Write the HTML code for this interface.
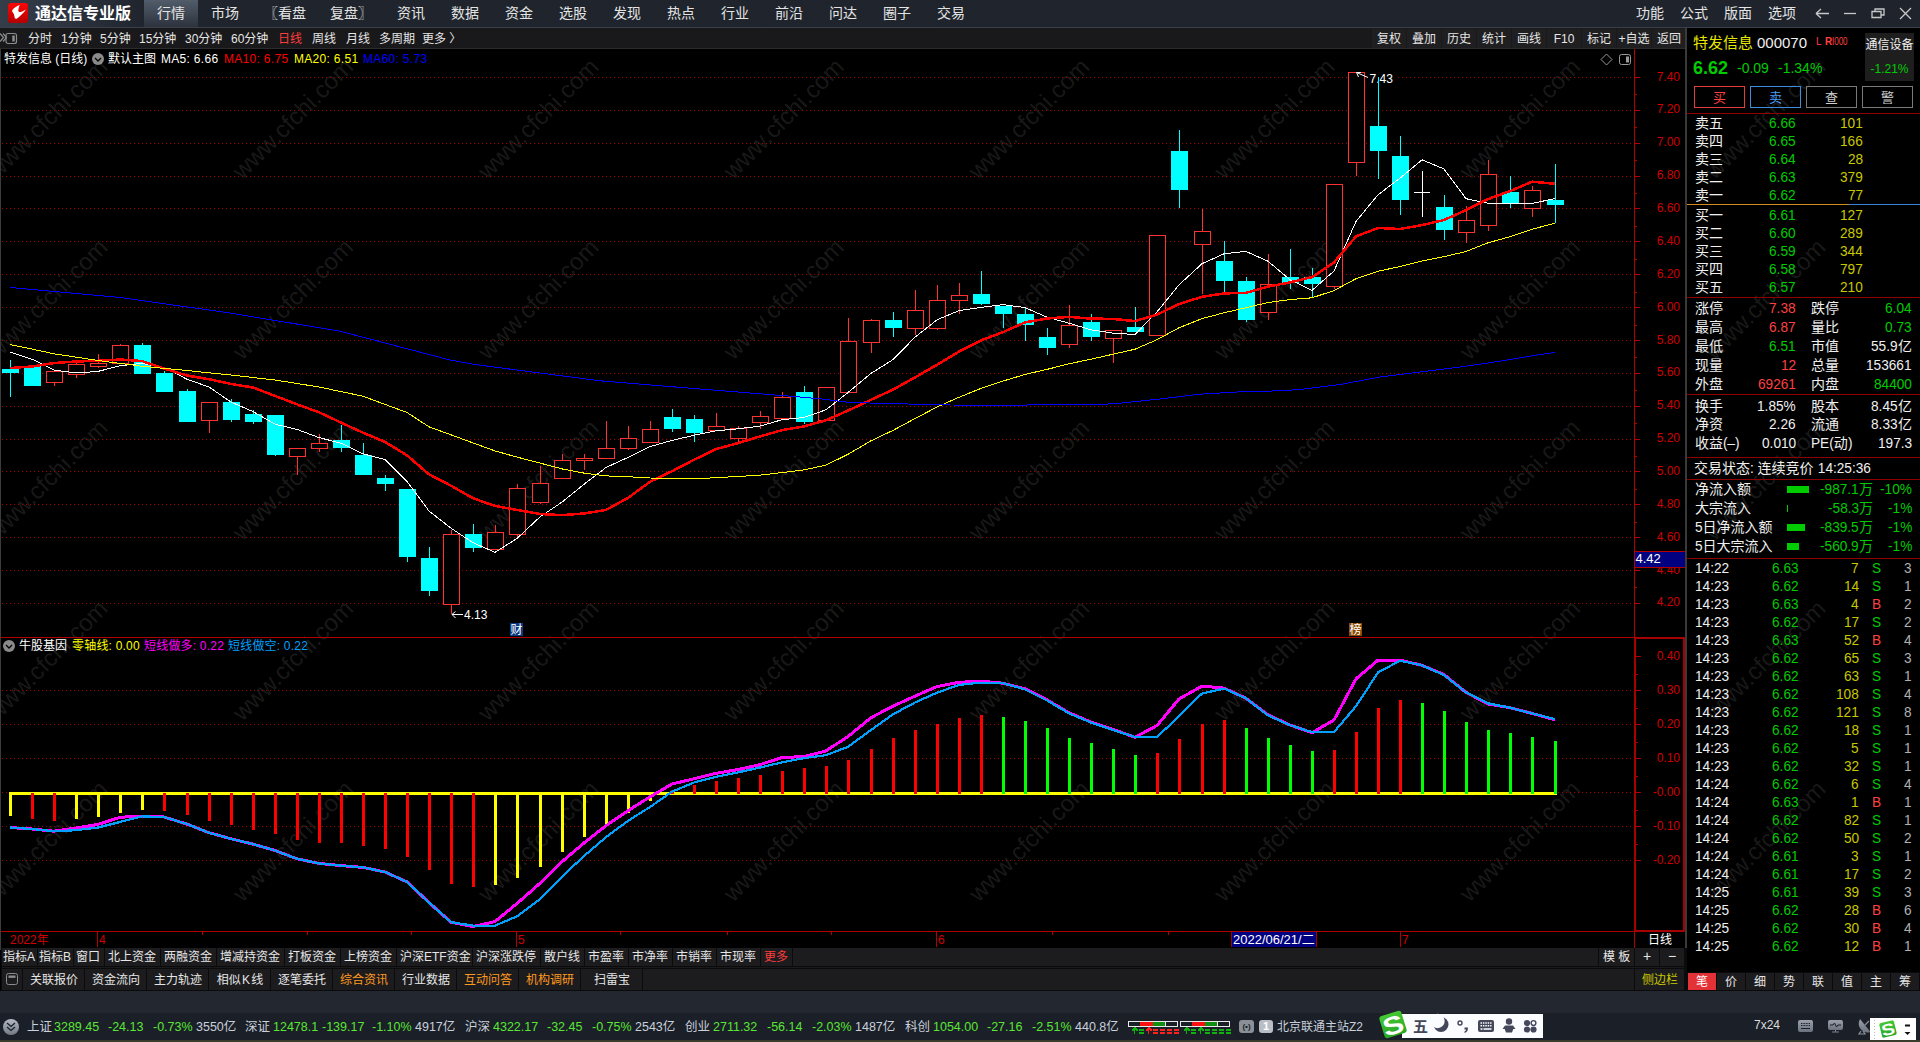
<!DOCTYPE html>
<html lang="zh-CN"><head><meta charset="utf-8"><title>通达信专业版</title>
<style>
html,body{margin:0;padding:0;}
body{width:1920px;height:1042px;overflow:hidden;position:relative;background:#000;font-family:"Liberation Sans","Noto Sans CJK SC",sans-serif;}
.t{position:absolute;white-space:nowrap;}
.b{position:absolute;}
.n{display:inline-block;transform-origin:left center;white-space:pre;}
svg{position:absolute;left:0;top:0;}
svg text{font-family:"Liberation Sans","Noto Sans CJK SC",sans-serif;}
</style></head><body>

<div class="b" style="left:0px;top:0px;width:1920px;height:28px;background:linear-gradient(90deg,#353d49 0,#2c333e 70px,#1f242d 145px,#1e232c 100%);"></div>
<div class="b" style="left:0px;top:27px;width:1920px;height:1px;background:#3a404b;"></div>
<div class="b" style="left:144px;top:0px;width:54px;height:27px;background:linear-gradient(#525c6a,#2c333d);"></div>
<svg width="40" height="27" viewBox="0 0 40 27"><defs><linearGradient id="lg" x1="0" y1="0" x2="0" y2="1"><stop offset="0" stop-color="#ff0505"/><stop offset="1" stop-color="#b40000"/></linearGradient></defs>
<rect x="8" y="3" width="20" height="20" rx="3" fill="url(#lg)"/>
<path d="M19.700 5C16 6.500 12.500 9 12 11L14 14.500L14.900 18.500L16.800 18.700C20 16 24 12.500 25.900 9.400C23.500 11 21 12 19.200 12C18 11.500 18 9.500 19.700 5z" fill="#fff"/></svg>
<div class="t" style="top:3.5px;font-size:16px;line-height:20px;color:#fff;font-weight:bold;left:35px;">通达信专业版</div>
<div class="t" style="top:4.0px;font-size:14px;line-height:18px;color:#e4e4e4;left:157px;">行情</div>
<div class="t" style="top:4.0px;font-size:14px;line-height:18px;color:#e4e4e4;left:211px;">市场</div>
<div class="t" style="top:4.0px;font-size:14px;line-height:18px;color:#e4e4e4;left:264px;">〖看盘</div>
<div class="t" style="top:4.0px;font-size:14px;line-height:18px;color:#e4e4e4;left:330px;">复盘〗</div>
<div class="t" style="top:4.0px;font-size:14px;line-height:18px;color:#e4e4e4;left:397px;">资讯</div>
<div class="t" style="top:4.0px;font-size:14px;line-height:18px;color:#e4e4e4;left:451px;">数据</div>
<div class="t" style="top:4.0px;font-size:14px;line-height:18px;color:#e4e4e4;left:505px;">资金</div>
<div class="t" style="top:4.0px;font-size:14px;line-height:18px;color:#e4e4e4;left:559px;">选股</div>
<div class="t" style="top:4.0px;font-size:14px;line-height:18px;color:#e4e4e4;left:613px;">发现</div>
<div class="t" style="top:4.0px;font-size:14px;line-height:18px;color:#e4e4e4;left:667px;">热点</div>
<div class="t" style="top:4.0px;font-size:14px;line-height:18px;color:#e4e4e4;left:721px;">行业</div>
<div class="t" style="top:4.0px;font-size:14px;line-height:18px;color:#e4e4e4;left:775px;">前沿</div>
<div class="t" style="top:4.0px;font-size:14px;line-height:18px;color:#e4e4e4;left:829px;">问达</div>
<div class="t" style="top:4.0px;font-size:14px;line-height:18px;color:#e4e4e4;left:883px;">圈子</div>
<div class="t" style="top:4.0px;font-size:14px;line-height:18px;color:#e4e4e4;left:937px;">交易</div>
<div class="t" style="top:4.0px;font-size:14px;line-height:18px;color:#e4e4e4;left:1636px;">功能</div>
<div class="t" style="top:4.0px;font-size:14px;line-height:18px;color:#e4e4e4;left:1680px;">公式</div>
<div class="t" style="top:4.0px;font-size:14px;line-height:18px;color:#e4e4e4;left:1724px;">版面</div>
<div class="t" style="top:4.0px;font-size:14px;line-height:18px;color:#e4e4e4;left:1768px;">选项</div>
<svg width="1920" height="27" viewBox="0 0 1920 27" fill="none" stroke="#c8c8c8" stroke-width="1.3">
<path d="M1816 13.500h13M1816 13.500l5-4.500M1816 13.500l5 4.500"/>
<path d="M1844 13.500h12"/>
<path d="M1872 11.500h9v6h-9zM1875 11.500v-2.500h9v6h-3"/>
<path d="M1900 8l11 11M1911 8l-11 11"/></svg>
<div class="b" style="left:0px;top:28px;width:1687px;height:21px;background:#19191b;"></div>
<div class="b" style="left:0px;top:48px;width:1686px;height:1px;background:#2c2c2e;"></div>
<svg width="30" height="50" viewBox="0 0 30 50" fill="none" stroke="#8c8c8c" stroke-width="1.200"><path d="M0 33.500l3.500 4-3.500 4M3 33.500l3.500 4-3.500 4"/><rect x="6" y="33.500" width="10.500" height="10" rx="2"/><path d="M13.500 35.500v6" stroke-width="2.500"/></svg>
<div class="t" style="top:30.5px;font-size:12px;line-height:16px;color:#e6e6e6;left:28px;">分时</div>
<div class="t" style="top:30.5px;font-size:12px;line-height:16px;color:#e6e6e6;left:61px;">1分钟</div>
<div class="t" style="top:30.5px;font-size:12px;line-height:16px;color:#e6e6e6;left:100px;">5分钟</div>
<div class="t" style="top:30.5px;font-size:12px;line-height:16px;color:#e6e6e6;left:139px;">15分钟</div>
<div class="t" style="top:30.5px;font-size:12px;line-height:16px;color:#e6e6e6;left:185px;">30分钟</div>
<div class="t" style="top:30.5px;font-size:12px;line-height:16px;color:#e6e6e6;left:231px;">60分钟</div>
<div class="t" style="top:30.5px;font-size:12px;line-height:16px;color:#ff3c3c;left:278px;">日线</div>
<div class="t" style="top:30.5px;font-size:12px;line-height:16px;color:#e6e6e6;left:312px;">周线</div>
<div class="t" style="top:30.5px;font-size:12px;line-height:16px;color:#e6e6e6;left:346px;">月线</div>
<div class="t" style="top:30.5px;font-size:12px;line-height:16px;color:#e6e6e6;left:379px;">多周期</div>
<div class="t" style="top:30.5px;font-size:12px;line-height:16px;color:#e6e6e6;left:422px;">更多 〉</div>
<div class="b" style="left:1372px;top:29px;width:34px;height:19px;background:#1f1f21;"></div>
<div class="t" style="top:30.5px;font-size:12px;line-height:16px;color:#e6e6e6;left:1189px;width:400px;text-align:center;">复权</div>
<div class="b" style="left:1407px;top:29px;width:34px;height:19px;background:#1f1f21;"></div>
<div class="t" style="top:30.5px;font-size:12px;line-height:16px;color:#e6e6e6;left:1224px;width:400px;text-align:center;">叠加</div>
<div class="b" style="left:1442px;top:29px;width:34px;height:19px;background:#1f1f21;"></div>
<div class="t" style="top:30.5px;font-size:12px;line-height:16px;color:#e6e6e6;left:1259px;width:400px;text-align:center;">历史</div>
<div class="b" style="left:1477px;top:29px;width:34px;height:19px;background:#1f1f21;"></div>
<div class="t" style="top:30.5px;font-size:12px;line-height:16px;color:#e6e6e6;left:1294px;width:400px;text-align:center;">统计</div>
<div class="b" style="left:1512px;top:29px;width:34px;height:19px;background:#1f1f21;"></div>
<div class="t" style="top:30.5px;font-size:12px;line-height:16px;color:#e6e6e6;left:1329px;width:400px;text-align:center;">画线</div>
<div class="b" style="left:1547px;top:29px;width:34px;height:19px;background:#1f1f21;"></div>
<div class="t" style="top:30.5px;font-size:12px;line-height:16px;color:#e6e6e6;left:1364px;width:400px;text-align:center;">F10</div>
<div class="b" style="left:1582px;top:29px;width:34px;height:19px;background:#1f1f21;"></div>
<div class="t" style="top:30.5px;font-size:12px;line-height:16px;color:#e6e6e6;left:1399px;width:400px;text-align:center;">标记</div>
<div class="b" style="left:1617px;top:29px;width:34px;height:19px;background:#1f1f21;"></div>
<div class="t" style="top:30.5px;font-size:12px;line-height:16px;color:#e6e6e6;left:1434px;width:400px;text-align:center;">+自选</div>
<div class="b" style="left:1652px;top:29px;width:34px;height:19px;background:#1f1f21;"></div>
<div class="t" style="top:30.5px;font-size:12px;line-height:16px;color:#e6e6e6;left:1469px;width:400px;text-align:center;">返回</div>
<svg width="1688" height="950" viewBox="0 0 1688 950" shape-rendering="crispEdges">
<g shape-rendering="auto"><text transform="translate(-3.0,180.5) rotate(-45)" font-size="24" fill="#ffffff" fill-opacity="0.115">www.cfchi.com</text><text transform="translate(-3.0,361.1) rotate(-45)" font-size="24" fill="#ffffff" fill-opacity="0.115">www.cfchi.com</text><text transform="translate(-3.0,541.7) rotate(-45)" font-size="24" fill="#ffffff" fill-opacity="0.115">www.cfchi.com</text><text transform="translate(-3.0,722.3) rotate(-45)" font-size="24" fill="#ffffff" fill-opacity="0.115">www.cfchi.com</text><text transform="translate(-3.0,902.9) rotate(-45)" font-size="24" fill="#ffffff" fill-opacity="0.115">www.cfchi.com</text><text transform="translate(242.4,180.5) rotate(-45)" font-size="24" fill="#ffffff" fill-opacity="0.115">www.cfchi.com</text><text transform="translate(242.4,361.1) rotate(-45)" font-size="24" fill="#ffffff" fill-opacity="0.115">www.cfchi.com</text><text transform="translate(242.4,541.7) rotate(-45)" font-size="24" fill="#ffffff" fill-opacity="0.115">www.cfchi.com</text><text transform="translate(242.4,722.3) rotate(-45)" font-size="24" fill="#ffffff" fill-opacity="0.115">www.cfchi.com</text><text transform="translate(242.4,902.9) rotate(-45)" font-size="24" fill="#ffffff" fill-opacity="0.115">www.cfchi.com</text><text transform="translate(487.8,180.5) rotate(-45)" font-size="24" fill="#ffffff" fill-opacity="0.115">www.cfchi.com</text><text transform="translate(487.8,361.1) rotate(-45)" font-size="24" fill="#ffffff" fill-opacity="0.115">www.cfchi.com</text><text transform="translate(487.8,541.7) rotate(-45)" font-size="24" fill="#ffffff" fill-opacity="0.115">www.cfchi.com</text><text transform="translate(487.8,722.3) rotate(-45)" font-size="24" fill="#ffffff" fill-opacity="0.115">www.cfchi.com</text><text transform="translate(487.8,902.9) rotate(-45)" font-size="24" fill="#ffffff" fill-opacity="0.115">www.cfchi.com</text><text transform="translate(733.2,180.5) rotate(-45)" font-size="24" fill="#ffffff" fill-opacity="0.115">www.cfchi.com</text><text transform="translate(733.2,361.1) rotate(-45)" font-size="24" fill="#ffffff" fill-opacity="0.115">www.cfchi.com</text><text transform="translate(733.2,541.7) rotate(-45)" font-size="24" fill="#ffffff" fill-opacity="0.115">www.cfchi.com</text><text transform="translate(733.2,722.3) rotate(-45)" font-size="24" fill="#ffffff" fill-opacity="0.115">www.cfchi.com</text><text transform="translate(733.2,902.9) rotate(-45)" font-size="24" fill="#ffffff" fill-opacity="0.115">www.cfchi.com</text><text transform="translate(978.6,180.5) rotate(-45)" font-size="24" fill="#ffffff" fill-opacity="0.115">www.cfchi.com</text><text transform="translate(978.6,361.1) rotate(-45)" font-size="24" fill="#ffffff" fill-opacity="0.115">www.cfchi.com</text><text transform="translate(978.6,541.7) rotate(-45)" font-size="24" fill="#ffffff" fill-opacity="0.115">www.cfchi.com</text><text transform="translate(978.6,722.3) rotate(-45)" font-size="24" fill="#ffffff" fill-opacity="0.115">www.cfchi.com</text><text transform="translate(978.6,902.9) rotate(-45)" font-size="24" fill="#ffffff" fill-opacity="0.115">www.cfchi.com</text><text transform="translate(1224.0,180.5) rotate(-45)" font-size="24" fill="#ffffff" fill-opacity="0.115">www.cfchi.com</text><text transform="translate(1224.0,361.1) rotate(-45)" font-size="24" fill="#ffffff" fill-opacity="0.115">www.cfchi.com</text><text transform="translate(1224.0,541.7) rotate(-45)" font-size="24" fill="#ffffff" fill-opacity="0.115">www.cfchi.com</text><text transform="translate(1224.0,722.3) rotate(-45)" font-size="24" fill="#ffffff" fill-opacity="0.115">www.cfchi.com</text><text transform="translate(1224.0,902.9) rotate(-45)" font-size="24" fill="#ffffff" fill-opacity="0.115">www.cfchi.com</text><text transform="translate(1469.4,180.5) rotate(-45)" font-size="24" fill="#ffffff" fill-opacity="0.115">www.cfchi.com</text><text transform="translate(1469.4,361.1) rotate(-45)" font-size="24" fill="#ffffff" fill-opacity="0.115">www.cfchi.com</text><text transform="translate(1469.4,541.7) rotate(-45)" font-size="24" fill="#ffffff" fill-opacity="0.115">www.cfchi.com</text><text transform="translate(1469.4,722.3) rotate(-45)" font-size="24" fill="#ffffff" fill-opacity="0.115">www.cfchi.com</text><text transform="translate(1469.4,902.9) rotate(-45)" font-size="24" fill="#ffffff" fill-opacity="0.115">www.cfchi.com</text></g>
<path d="M2 77.5H1632" stroke="#a80000" stroke-width="1" stroke-dasharray="1 3"/>
<path d="M2 110.5H1632" stroke="#a80000" stroke-width="1" stroke-dasharray="1 3"/>
<path d="M2 143.5H1632" stroke="#a80000" stroke-width="1" stroke-dasharray="1 3"/>
<path d="M2 176.5H1632" stroke="#a80000" stroke-width="1" stroke-dasharray="1 3"/>
<path d="M2 208.5H1632" stroke="#a80000" stroke-width="1" stroke-dasharray="1 3"/>
<path d="M2 241.5H1632" stroke="#a80000" stroke-width="1" stroke-dasharray="1 3"/>
<path d="M2 274.5H1632" stroke="#a80000" stroke-width="1" stroke-dasharray="1 3"/>
<path d="M2 307.5H1632" stroke="#a80000" stroke-width="1" stroke-dasharray="1 3"/>
<path d="M2 340.5H1632" stroke="#a80000" stroke-width="1" stroke-dasharray="1 3"/>
<path d="M2 373.5H1632" stroke="#a80000" stroke-width="1" stroke-dasharray="1 3"/>
<path d="M2 406.5H1632" stroke="#a80000" stroke-width="1" stroke-dasharray="1 3"/>
<path d="M2 439.5H1632" stroke="#a80000" stroke-width="1" stroke-dasharray="1 3"/>
<path d="M2 471.5H1632" stroke="#a80000" stroke-width="1" stroke-dasharray="1 3"/>
<path d="M2 504.5H1632" stroke="#a80000" stroke-width="1" stroke-dasharray="1 3"/>
<path d="M2 537.5H1632" stroke="#a80000" stroke-width="1" stroke-dasharray="1 3"/>
<path d="M2 570.5H1632" stroke="#a80000" stroke-width="1" stroke-dasharray="1 3"/>
<path d="M2 603.5H1632" stroke="#a80000" stroke-width="1" stroke-dasharray="1 3"/>
<path d="M2 690.5H1632" stroke="#a80000" stroke-width="1" stroke-dasharray="1 3"/>
<path d="M2 724.5H1632" stroke="#a80000" stroke-width="1" stroke-dasharray="1 3"/>
<path d="M2 758.5H1632" stroke="#a80000" stroke-width="1" stroke-dasharray="1 3"/>
<path d="M2 792.5H1632" stroke="#a80000" stroke-width="1" stroke-dasharray="1 3"/>
<path d="M2 826.5H1632" stroke="#a80000" stroke-width="1" stroke-dasharray="1 3"/>
<path d="M2 860.5H1632" stroke="#a80000" stroke-width="1" stroke-dasharray="1 3"/>
<path d="M1 637.500H1634M1634.500 49V948M1 931.500H1685" stroke="#b00000" stroke-width="1" fill="none"/>
<path d="M0.500 49V991" stroke="#3c3c3c" stroke-width="1"/>
<rect x="1635" y="638" width="49" height="293" fill="none" stroke="#a80000" stroke-width="2"/>
<path d="M1635 77.5h5M1635 94.5h2M1635 110.5h5M1635 127.5h2M1635 143.5h5M1635 160.5h2M1635 176.5h5M1635 193.5h2M1635 208.5h5M1635 226.5h2M1635 241.5h5M1635 259.5h2M1635 274.5h5M1635 292.5h2M1635 307.5h5M1635 325.5h2M1635 340.5h5M1635 357.5h2M1635 373.5h5M1635 390.5h2M1635 406.5h5M1635 423.5h2M1635 439.5h5M1635 456.5h2M1635 471.5h5M1635 489.5h2M1635 504.5h5M1635 522.5h2M1635 537.5h5M1635 555.5h2M1635 570.5h5M1635 587.5h2M1635 603.5h5M1636 656.5h5M1636 674.5h2M1636 690.5h5M1636 708.5h2M1636 724.5h5M1636 742.5h2M1636 758.5h5M1636 776.5h2M1636 792.5h5M1636 810.5h2M1636 826.5h5M1636 844.5h2M1636 860.5h5" stroke="#b00000" stroke-width="1"/>
<path d="M97.5 932v15M516.5 932v15M936.5 932v15M1400.5 932v15M202.5 932v3M307.5 932v3M411.5 932v3M620.5 932v3M727.5 932v3M831.5 932v3M1052.5 932v3M1168.5 932v3" stroke="#b00000" stroke-width="1"/>
<rect x="1366" y="72" width="29" height="13" fill="#000"/>
<g shape-rendering="auto"><text x="1369.500" y="83" font-size="12" fill="#fff">7.43</text><text x="464" y="619" font-size="12" fill="#fff">4.13</text></g>
<rect x="2" y="369" width="17" height="4" fill="#00ffff"/>
<path d="M10.5 360V397" stroke="#00ffff" stroke-width="1"/>
<rect x="24" y="366" width="17" height="20" fill="#00ffff"/>
<path d="M32.5 366V386" stroke="#00ffff" stroke-width="1"/>
<rect x="46.5" y="371.5" width="16" height="11" fill="#000" stroke="#ff3232" stroke-width="1"/>
<path d="M54.5 383V386" stroke="#ff3232" stroke-width="1"/>
<rect x="68.5" y="364.5" width="16" height="10" fill="#000" stroke="#ff3232" stroke-width="1"/>
<path d="M76.5 362V364M76.5 375V378" stroke="#ff3232" stroke-width="1"/>
<rect x="90.5" y="363.5" width="16" height="3" fill="#000" stroke="#ff3232" stroke-width="1"/>
<path d="M98.5 354V363M98.5 367V368" stroke="#ff3232" stroke-width="1"/>
<rect x="112.5" y="345.5" width="16" height="18" fill="#000" stroke="#ff3232" stroke-width="1"/>
<path d="M120.5 344V345" stroke="#ff3232" stroke-width="1"/>
<rect x="134" y="345" width="17" height="29" fill="#00ffff"/>
<path d="M142.5 343V374" stroke="#00ffff" stroke-width="1"/>
<rect x="156" y="373" width="17" height="19" fill="#00ffff"/>
<path d="M164.5 371V392" stroke="#00ffff" stroke-width="1"/>
<rect x="179" y="391" width="17" height="31" fill="#00ffff"/>
<path d="M187.5 389V422" stroke="#00ffff" stroke-width="1"/>
<rect x="201.5" y="402.5" width="16" height="18" fill="#000" stroke="#ff3232" stroke-width="1"/>
<path d="M209.5 421V433" stroke="#ff3232" stroke-width="1"/>
<rect x="223" y="402" width="17" height="18" fill="#00ffff"/>
<path d="M231.5 399V422" stroke="#00ffff" stroke-width="1"/>
<rect x="245" y="414" width="17" height="8" fill="#00ffff"/>
<path d="M253.5 410V424" stroke="#00ffff" stroke-width="1"/>
<rect x="267" y="415" width="17" height="40" fill="#00ffff"/>
<path d="M275.5 415V456" stroke="#00ffff" stroke-width="1"/>
<rect x="289.5" y="448.5" width="16" height="8" fill="#000" stroke="#ff3232" stroke-width="1"/>
<path d="M297.5 457V475" stroke="#ff3232" stroke-width="1"/>
<rect x="311.5" y="443.5" width="16" height="5" fill="#000" stroke="#ff3232" stroke-width="1"/>
<path d="M319.5 434V443M319.5 449V452" stroke="#ff3232" stroke-width="1"/>
<rect x="333" y="440" width="17" height="8" fill="#00ffff"/>
<path d="M341.5 425V452" stroke="#00ffff" stroke-width="1"/>
<rect x="355" y="455" width="17" height="20" fill="#00ffff"/>
<path d="M363.5 443V475" stroke="#00ffff" stroke-width="1"/>
<rect x="377" y="478" width="17" height="6" fill="#00ffff"/>
<path d="M385.5 475V491" stroke="#00ffff" stroke-width="1"/>
<rect x="399" y="489" width="17" height="68" fill="#00ffff"/>
<path d="M407.5 489V562" stroke="#00ffff" stroke-width="1"/>
<rect x="421" y="558" width="17" height="33" fill="#00ffff"/>
<path d="M429.5 547V596" stroke="#00ffff" stroke-width="1"/>
<rect x="443.5" y="534.5" width="16" height="70" fill="#000" stroke="#ff3232" stroke-width="1"/>
<path d="M451.5 530V534M451.5 605V614" stroke="#ff3232" stroke-width="1"/>
<rect x="465" y="534" width="17" height="14" fill="#00ffff"/>
<path d="M473.5 524V552" stroke="#00ffff" stroke-width="1"/>
<rect x="487.5" y="532.5" width="16" height="17" fill="#000" stroke="#ff3232" stroke-width="1"/>
<path d="M495.5 525V532" stroke="#ff3232" stroke-width="1"/>
<rect x="509.5" y="488.5" width="16" height="46" fill="#000" stroke="#ff3232" stroke-width="1"/>
<path d="M517.5 484V488M517.5 535V537" stroke="#ff3232" stroke-width="1"/>
<rect x="532.5" y="483.5" width="16" height="19" fill="#000" stroke="#ff3232" stroke-width="1"/>
<path d="M540.5 466V483M540.5 503V504" stroke="#ff3232" stroke-width="1"/>
<rect x="554.5" y="460.5" width="16" height="18" fill="#000" stroke="#ff3232" stroke-width="1"/>
<path d="M562.5 454V460" stroke="#ff3232" stroke-width="1"/>
<rect x="576.5" y="458.5" width="16" height="2" fill="#000" stroke="#ff3232" stroke-width="1"/>
<path d="M584.5 454V458M584.5 461V470" stroke="#ff3232" stroke-width="1"/>
<rect x="598.5" y="448.5" width="16" height="10" fill="#000" stroke="#ff3232" stroke-width="1"/>
<path d="M606.5 421V448" stroke="#ff3232" stroke-width="1"/>
<rect x="620.5" y="438.5" width="16" height="10" fill="#000" stroke="#ff3232" stroke-width="1"/>
<path d="M628.5 426V438M628.5 449V450" stroke="#ff3232" stroke-width="1"/>
<rect x="642.5" y="429.5" width="16" height="13" fill="#000" stroke="#ff3232" stroke-width="1"/>
<path d="M650.5 421V429" stroke="#ff3232" stroke-width="1"/>
<rect x="664" y="417" width="17" height="12" fill="#00ffff"/>
<path d="M672.5 409V432" stroke="#00ffff" stroke-width="1"/>
<rect x="686" y="419" width="17" height="14" fill="#00ffff"/>
<path d="M694.5 415V442" stroke="#00ffff" stroke-width="1"/>
<rect x="708.5" y="426.5" width="16" height="4" fill="#000" stroke="#ff3232" stroke-width="1"/>
<path d="M716.5 413V426M716.5 431V431" stroke="#ff3232" stroke-width="1"/>
<rect x="730.5" y="428.5" width="16" height="10" fill="#000" stroke="#ff3232" stroke-width="1"/>
<path d="M738.5 426V428M738.5 439V442" stroke="#ff3232" stroke-width="1"/>
<rect x="752.5" y="416.5" width="16" height="6" fill="#000" stroke="#ff3232" stroke-width="1"/>
<path d="M760.5 411V416M760.5 423V429" stroke="#ff3232" stroke-width="1"/>
<rect x="774.5" y="397.5" width="16" height="21" fill="#000" stroke="#ff3232" stroke-width="1"/>
<path d="M782.5 392V397M782.5 419V419" stroke="#ff3232" stroke-width="1"/>
<rect x="796" y="392" width="17" height="30" fill="#00ffff"/>
<path d="M804.5 386V424" stroke="#00ffff" stroke-width="1"/>
<rect x="818.5" y="387.5" width="16" height="33" fill="#000" stroke="#ff3232" stroke-width="1"/>
<rect x="840.5" y="341.5" width="16" height="51" fill="#000" stroke="#ff3232" stroke-width="1"/>
<path d="M848.5 318V341" stroke="#ff3232" stroke-width="1"/>
<rect x="863.5" y="320.5" width="16" height="22" fill="#000" stroke="#ff3232" stroke-width="1"/>
<path d="M871.5 319V320M871.5 343V353" stroke="#ff3232" stroke-width="1"/>
<rect x="885" y="320" width="17" height="8" fill="#00ffff"/>
<path d="M893.5 312V337" stroke="#00ffff" stroke-width="1"/>
<rect x="907.5" y="310.5" width="16" height="18" fill="#000" stroke="#ff3232" stroke-width="1"/>
<path d="M915.5 290V310M915.5 329V335" stroke="#ff3232" stroke-width="1"/>
<rect x="929.5" y="300.5" width="16" height="28" fill="#000" stroke="#ff3232" stroke-width="1"/>
<path d="M937.5 285V300M937.5 329V330" stroke="#ff3232" stroke-width="1"/>
<rect x="951.5" y="295.5" width="16" height="5" fill="#000" stroke="#ff3232" stroke-width="1"/>
<path d="M959.5 283V295M959.5 301V314" stroke="#ff3232" stroke-width="1"/>
<rect x="973" y="294" width="17" height="10" fill="#00ffff"/>
<path d="M981.5 271V305" stroke="#00ffff" stroke-width="1"/>
<rect x="995" y="306" width="17" height="8" fill="#00ffff"/>
<path d="M1003.5 306V328" stroke="#00ffff" stroke-width="1"/>
<rect x="1017" y="314" width="17" height="11" fill="#00ffff"/>
<path d="M1025.5 307V341" stroke="#00ffff" stroke-width="1"/>
<rect x="1039" y="337" width="17" height="11" fill="#00ffff"/>
<path d="M1047.5 328V355" stroke="#00ffff" stroke-width="1"/>
<rect x="1061.5" y="325.5" width="16" height="19" fill="#000" stroke="#ff3232" stroke-width="1"/>
<path d="M1069.5 305V325M1069.5 345V348" stroke="#ff3232" stroke-width="1"/>
<rect x="1083" y="322" width="17" height="15" fill="#00ffff"/>
<path d="M1091.5 314V341" stroke="#00ffff" stroke-width="1"/>
<rect x="1105.5" y="330.5" width="16" height="8" fill="#000" stroke="#ff3232" stroke-width="1"/>
<path d="M1113.5 339V363" stroke="#ff3232" stroke-width="1"/>
<rect x="1127" y="327" width="17" height="5" fill="#00ffff"/>
<path d="M1135.5 307V332" stroke="#00ffff" stroke-width="1"/>
<rect x="1149.5" y="235.5" width="16" height="100" fill="#000" stroke="#ff3232" stroke-width="1"/>
<rect x="1171" y="151" width="17" height="39" fill="#00ffff"/>
<path d="M1179.5 130V208" stroke="#00ffff" stroke-width="1"/>
<rect x="1194.5" y="231.5" width="16" height="13" fill="#000" stroke="#ff3232" stroke-width="1"/>
<path d="M1202.5 209V231M1202.5 245V294" stroke="#ff3232" stroke-width="1"/>
<rect x="1216" y="261" width="17" height="20" fill="#00ffff"/>
<path d="M1224.5 241V292" stroke="#00ffff" stroke-width="1"/>
<rect x="1238" y="281" width="17" height="39" fill="#00ffff"/>
<path d="M1246.5 277V322" stroke="#00ffff" stroke-width="1"/>
<rect x="1260.5" y="284.5" width="16" height="28" fill="#000" stroke="#ff3232" stroke-width="1"/>
<path d="M1268.5 254V284M1268.5 313V320" stroke="#ff3232" stroke-width="1"/>
<rect x="1282" y="277" width="17" height="6" fill="#00ffff"/>
<path d="M1290.5 249V289" stroke="#00ffff" stroke-width="1"/>
<rect x="1304" y="277" width="17" height="7" fill="#00ffff"/>
<path d="M1312.5 268V297" stroke="#00ffff" stroke-width="1"/>
<rect x="1326.5" y="184.5" width="16" height="102" fill="#000" stroke="#ff3232" stroke-width="1"/>
<path d="M1334.5 287V289" stroke="#ff3232" stroke-width="1"/>
<rect x="1348.5" y="72.5" width="16" height="90" fill="#000" stroke="#ff3232" stroke-width="1"/>
<path d="M1356.5 163V176" stroke="#ff3232" stroke-width="1"/>
<rect x="1370" y="126" width="17" height="25" fill="#00ffff"/>
<path d="M1378.5 77V179" stroke="#00ffff" stroke-width="1"/>
<rect x="1392" y="156" width="17" height="44" fill="#00ffff"/>
<path d="M1400.5 136V215" stroke="#00ffff" stroke-width="1"/>
<path d="M1422.5 171V217M1414 192.5h16" stroke="#fff" stroke-width="1"/>
<rect x="1436" y="207" width="17" height="23" fill="#00ffff"/>
<path d="M1444.5 195V240" stroke="#00ffff" stroke-width="1"/>
<rect x="1458.5" y="220.5" width="16" height="12" fill="#000" stroke="#ff3232" stroke-width="1"/>
<path d="M1466.5 206V220M1466.5 233V243" stroke="#ff3232" stroke-width="1"/>
<rect x="1480.5" y="174.5" width="16" height="51" fill="#000" stroke="#ff3232" stroke-width="1"/>
<path d="M1488.5 160V174M1488.5 226V231" stroke="#ff3232" stroke-width="1"/>
<rect x="1502" y="192" width="17" height="11" fill="#00ffff"/>
<path d="M1510.5 176V208" stroke="#00ffff" stroke-width="1"/>
<rect x="1524.5" y="190.5" width="16" height="18" fill="#000" stroke="#ff3232" stroke-width="1"/>
<path d="M1532.5 186V190M1532.5 209V217" stroke="#ff3232" stroke-width="1"/>
<rect x="1547" y="200" width="17" height="5" fill="#00ffff"/>
<path d="M1555.5 164V223" stroke="#00ffff" stroke-width="1"/>
<g shape-rendering="auto"><path d="M1356.500 72.500L1368 77.500M1356.500 72.500h4.500M1356.500 72.500l2 4.500M452 614.500h11M452 614.500l3.500-3M452 614.500l3.500 3.500" stroke="#fff" stroke-width="1" fill="none"/></g>
<polyline points="10.0,352.0 32.0,359.2 54.0,370.0 76.0,373.0 98.0,371.4 120.0,365.8 142.0,363.4 164.0,367.6 187.0,379.2 209.0,387.0 231.0,402.0 253.0,411.6 275.0,424.2 297.0,429.4 319.0,437.6 341.0,443.2 363.0,453.8 385.0,459.6 407.0,481.4 429.0,511.0 451.0,528.2 473.0,542.7 495.0,552.3 517.0,538.5 540.0,516.9 562.0,502.1 584.0,484.3 606.0,467.5 628.0,457.4 650.0,446.6 672.0,440.4 694.0,435.3 716.0,430.8 738.0,428.8 760.0,426.1 782.0,419.7 804.0,417.5 826.0,409.8 848.0,392.5 871.0,373.4 893.0,359.6 915.0,337.2 937.0,319.8 959.0,310.6 981.0,307.4 1003.0,304.6 1025.0,307.6 1047.0,317.2 1069.0,323.2 1091.0,329.8 1113.0,333.1 1135.0,334.5 1157.0,311.9 1179.0,284.9 1202.0,263.7 1224.0,253.8 1246.0,251.4 1268.0,261.2 1290.0,279.8 1312.0,290.4 1334.0,271.0 1356.0,221.4 1378.0,194.8 1400.0,178.2 1422.0,159.8 1444.0,169.0 1466.0,198.7 1488.0,203.3 1510.0,203.9 1532.0,203.5 1555.0,198.5" fill="none" stroke="#ffffff" stroke-width="1" stroke-linejoin="round" />
<polyline points="10.0,368.0 32.0,366.5 54.0,363.0 76.0,361.5 98.0,360.8 120.0,359.5 142.0,361.0 164.0,368.5 187.0,375.5 209.0,379.2 231.0,383.9 253.0,387.5 275.0,395.9 297.0,404.3 319.0,412.3 341.0,422.6 363.0,432.7 385.0,441.9 407.0,455.4 429.0,474.3 451.0,485.7 473.0,498.2 495.0,505.9 517.0,509.9 540.0,514.0 562.0,515.1 584.0,513.5 606.0,509.9 628.0,497.9 650.0,481.8 672.0,471.2 694.0,459.8 716.0,449.1 738.0,443.1 760.0,436.4 782.0,430.1 804.0,426.4 826.0,420.3 848.0,410.6 871.0,399.8 893.0,389.6 915.0,377.4 937.0,364.8 959.0,351.6 981.0,340.4 1003.0,332.1 1025.0,322.4 1047.0,318.5 1069.0,316.9 1091.0,318.6 1113.0,318.9 1135.0,321.1 1157.0,314.6 1179.0,304.1 1202.0,296.8 1224.0,293.4 1246.0,292.9 1268.0,286.6 1290.0,282.4 1312.0,277.1 1334.0,262.4 1356.0,236.4 1378.0,228.0 1400.0,229.0 1422.0,225.1 1444.0,220.0 1466.0,210.1 1488.0,199.1 1510.0,191.1 1532.0,181.7 1555.0,183.8" fill="none" stroke="#ff0000" stroke-width="2.5" stroke-linejoin="round" />
<polyline points="10.0,344.5 32.0,349.1 54.0,353.8 76.0,357.1 98.0,360.5 120.0,363.4 142.0,366.2 164.0,368.4 187.0,370.5 209.0,372.8 231.0,375.0 253.0,377.5 275.0,380.0 297.0,383.5 319.0,387.0 341.0,391.6 363.0,396.2 385.0,404.4 407.0,412.5 429.0,426.8 451.0,434.8 473.0,442.9 495.0,450.9 517.0,457.1 540.0,463.1 562.0,468.9 584.0,473.1 606.0,475.9 628.0,476.7 650.0,478.0 672.0,478.5 694.0,479.0 716.0,477.6 738.0,476.5 760.0,475.1 782.0,472.6 804.0,469.9 826.0,465.1 848.0,454.3 871.0,440.8 893.0,430.4 915.0,418.6 937.0,407.0 959.0,397.3 981.0,388.4 1003.0,381.1 1025.0,374.4 1047.0,369.4 1069.0,363.8 1091.0,359.2 1113.0,354.2 1135.0,349.2 1157.0,339.7 1179.0,327.8 1202.0,318.6 1224.0,312.8 1246.0,307.7 1268.0,302.5 1290.0,299.6 1312.0,297.8 1334.0,290.6 1356.0,278.7 1378.0,271.3 1400.0,266.5 1422.0,260.9 1444.0,256.7 1466.0,251.5 1488.0,242.8 1510.0,236.7 1532.0,229.3 1555.0,223.1" fill="none" stroke="#ffff00" stroke-width="1" stroke-linejoin="round" />
<polyline points="10.0,287.5 120.0,297.5 230.0,313.0 340.0,331.2 450.0,360.0 475.0,364.5 540.0,373.0 600.0,380.8 690.0,388.2 760.0,393.8 800.0,397.0 820.0,398.8 850.0,402.5 900.0,403.8 950.0,405.0 1000.0,405.2 1100.0,404.5 1120.0,403.2 1160.0,399.0 1200.0,394.2 1240.0,391.8 1280.0,390.8 1300.0,389.5 1340.0,384.5 1380.0,377.0 1420.0,372.0 1460.0,367.0 1500.0,361.2 1540.0,354.5 1555.0,352.5" fill="none" stroke="#0000ff" stroke-width="1" stroke-linejoin="round" />
<g shape-rendering="auto"><rect x="510" y="623" width="13" height="13" fill="#0a3a82"/><text x="516.500" y="634" font-size="12" fill="#fff" text-anchor="middle">财</text>
<rect x="1349" y="623" width="13" height="13" fill="#8b4a06"/><text x="1355.500" y="634" font-size="12" fill="#fff" text-anchor="middle">榜</text></g>
<rect x="9" y="792" width="1548" height="3" fill="#ffff00"/>
<rect x="9" y="793" width="3" height="23" fill="#ffff00"/>
<rect x="31" y="793" width="3" height="26" fill="#ff0000"/>
<rect x="53" y="793" width="3" height="28" fill="#ff0000"/>
<rect x="75" y="793" width="3" height="26" fill="#ffff00"/>
<rect x="97" y="793" width="3" height="24" fill="#ffff00"/>
<rect x="119" y="793" width="3" height="20" fill="#ffff00"/>
<rect x="141" y="793" width="3" height="17" fill="#ffff00"/>
<rect x="163" y="793" width="3" height="18" fill="#ff0000"/>
<rect x="186" y="793" width="3" height="22" fill="#ff0000"/>
<rect x="208" y="793" width="3" height="28" fill="#ff0000"/>
<rect x="230" y="793" width="3" height="32" fill="#ff0000"/>
<rect x="252" y="793" width="3" height="37" fill="#ff0000"/>
<rect x="274" y="793" width="3" height="41" fill="#ff0000"/>
<rect x="296" y="793" width="3" height="47" fill="#ff0000"/>
<rect x="318" y="793" width="3" height="50" fill="#ff0000"/>
<rect x="340" y="793" width="3" height="50" fill="#ff0000"/>
<rect x="362" y="793" width="3" height="53" fill="#ff0000"/>
<rect x="384" y="793" width="3" height="56" fill="#ff0000"/>
<rect x="406" y="793" width="3" height="64" fill="#ff0000"/>
<rect x="428" y="793" width="3" height="77" fill="#ff0000"/>
<rect x="450" y="793" width="3" height="91" fill="#ff0000"/>
<rect x="472" y="793" width="3" height="94" fill="#ff0000"/>
<rect x="494" y="793" width="3" height="92" fill="#ffff00"/>
<rect x="516" y="793" width="3" height="85" fill="#ffff00"/>
<rect x="539" y="793" width="3" height="74" fill="#ffff00"/>
<rect x="561" y="793" width="3" height="59" fill="#ffff00"/>
<rect x="583" y="793" width="3" height="44" fill="#ffff00"/>
<rect x="605" y="793" width="3" height="32" fill="#ffff00"/>
<rect x="627" y="793" width="3" height="20" fill="#ffff00"/>
<rect x="649" y="793" width="3" height="8" fill="#ffff00"/>
<rect x="671" y="790" width="3" height="4" fill="#ff0000"/>
<rect x="693" y="785" width="3" height="9" fill="#ff0000"/>
<rect x="715" y="781" width="3" height="13" fill="#ff0000"/>
<rect x="737" y="778" width="3" height="16" fill="#ff0000"/>
<rect x="759" y="775" width="3" height="19" fill="#ff0000"/>
<rect x="781" y="771" width="3" height="23" fill="#ff0000"/>
<rect x="803" y="768" width="3" height="26" fill="#ff0000"/>
<rect x="825" y="766" width="3" height="28" fill="#ff0000"/>
<rect x="847" y="760" width="3" height="34" fill="#ff0000"/>
<rect x="870" y="749" width="3" height="45" fill="#ff0000"/>
<rect x="892" y="738" width="3" height="56" fill="#ff0000"/>
<rect x="914" y="730" width="3" height="64" fill="#ff0000"/>
<rect x="936" y="724" width="3" height="70" fill="#ff0000"/>
<rect x="958" y="718" width="3" height="76" fill="#ff0000"/>
<rect x="980" y="715" width="3" height="79" fill="#ff0000"/>
<rect x="1002" y="717" width="3" height="77" fill="#00ff00"/>
<rect x="1024" y="721" width="3" height="73" fill="#00ff00"/>
<rect x="1046" y="728" width="3" height="66" fill="#00ff00"/>
<rect x="1068" y="738" width="3" height="56" fill="#00ff00"/>
<rect x="1090" y="743" width="3" height="51" fill="#00ff00"/>
<rect x="1112" y="749" width="3" height="45" fill="#00ff00"/>
<rect x="1134" y="755" width="3" height="39" fill="#00ff00"/>
<rect x="1156" y="753" width="3" height="41" fill="#ff0000"/>
<rect x="1178" y="739" width="3" height="55" fill="#ff0000"/>
<rect x="1201" y="724" width="3" height="70" fill="#ff0000"/>
<rect x="1223" y="720" width="3" height="74" fill="#ff0000"/>
<rect x="1245" y="728" width="3" height="66" fill="#00ff00"/>
<rect x="1267" y="738" width="3" height="56" fill="#00ff00"/>
<rect x="1289" y="745" width="3" height="49" fill="#00ff00"/>
<rect x="1311" y="751" width="3" height="43" fill="#00ff00"/>
<rect x="1333" y="750" width="3" height="44" fill="#ff0000"/>
<rect x="1355" y="732" width="3" height="62" fill="#ff0000"/>
<rect x="1377" y="708" width="3" height="86" fill="#ff0000"/>
<rect x="1399" y="700" width="3" height="94" fill="#ff0000"/>
<rect x="1421" y="703" width="3" height="91" fill="#00ff00"/>
<rect x="1443" y="711" width="3" height="83" fill="#00ff00"/>
<rect x="1465" y="722" width="3" height="72" fill="#00ff00"/>
<rect x="1487" y="730" width="3" height="64" fill="#00ff00"/>
<rect x="1509" y="733" width="3" height="61" fill="#00ff00"/>
<rect x="1531" y="737" width="3" height="57" fill="#00ff00"/>
<rect x="1554" y="741" width="3" height="53" fill="#00ff00"/>
<polyline points="10.0,827.5 32.0,829.0 54.0,831.2 76.0,828.1 98.0,824.4 120.0,817.3 142.0,816.0 164.0,817.0 187.0,824.1 209.0,832.7 231.0,838.8 253.0,844.1 275.0,850.5 297.0,858.8 319.0,863.4 341.0,865.6 363.0,867.4 385.0,872.0 407.0,881.9 429.0,902.6 451.0,922.2 473.0,926.5 495.0,921.6 517.0,903.5 540.0,883.3 562.0,861.7 584.0,843.0 606.0,825.7 628.0,810.7 650.0,796.9 672.0,784.0 694.0,778.8 716.0,773.3 738.0,769.6 760.0,764.7 782.0,757.5 804.0,756.6 826.0,750.9 848.0,736.5 871.0,717.7 893.0,706.2 915.0,696.1 937.0,686.6 959.0,682.3 981.0,681.2 1003.0,683.2 1025.0,688.9 1047.0,699.9 1069.0,712.8 1091.0,722.1 1113.0,729.3 1135.0,737.3 1157.0,725.5 1179.0,699.0 1202.0,686.1 1224.0,688.1 1246.0,698.3 1268.0,714.9 1290.0,725.0 1312.0,732.7 1334.0,720.0 1356.0,678.9 1378.0,660.2 1400.0,660.2 1422.0,665.3 1444.0,674.6 1466.0,692.4 1488.0,703.9 1510.0,707.7 1532.0,713.4 1555.0,719.8" fill="none" stroke="#ff00ff" stroke-width="3" stroke-linejoin="round" />
<polyline points="10.0,827.5 32.0,829.0 54.0,831.2 76.0,830.2 98.0,827.5 120.0,822.0 142.0,816.4 164.0,817.0 187.0,824.1 209.0,832.7 231.0,838.8 253.0,844.1 275.0,850.5 297.0,858.8 319.0,863.4 341.0,865.6 363.0,867.4 385.0,872.0 407.0,881.9 429.0,902.6 451.0,922.2 473.0,925.6 495.0,925.6 517.0,916.4 540.0,899.1 562.0,876.7 584.0,856.0 606.0,837.2 628.0,820.8 650.0,807.0 672.0,791.7 694.0,782.5 716.0,776.8 738.0,772.4 760.0,767.5 782.0,762.4 804.0,758.1 826.0,755.2 848.0,746.8 871.0,730.0 893.0,714.3 915.0,702.5 937.0,692.7 959.0,684.9 981.0,682.6 1003.0,683.2 1025.0,689.5 1047.0,700.5 1069.0,713.4 1091.0,722.6 1113.0,730.1 1135.0,737.0 1157.0,737.0 1179.0,716.3 1202.0,693.5 1224.0,688.6 1246.0,698.3 1268.0,715.4 1290.0,725.2 1312.0,732.1 1334.0,732.1 1356.0,706.2 1378.0,672.5 1400.0,660.7 1422.0,665.3 1444.0,675.1 1466.0,692.4 1488.0,703.3 1510.0,707.7 1532.0,713.4 1555.0,719.2" fill="none" stroke="#00a0ff" stroke-width="2.2" stroke-linejoin="round" />
<g shape-rendering="auto" font-size="12" fill="#d00000" text-anchor="end">
<text x="1680" y="80.5">7.40</text>
<text x="1680" y="113.4">7.20</text>
<text x="1680" y="146.2">7.00</text>
<text x="1680" y="179.1">6.80</text>
<text x="1680" y="212.0">6.60</text>
<text x="1680" y="244.8">6.40</text>
<text x="1680" y="277.7">6.20</text>
<text x="1680" y="310.6">6.00</text>
<text x="1680" y="343.5">5.80</text>
<text x="1680" y="376.3">5.60</text>
<text x="1680" y="409.2">5.40</text>
<text x="1680" y="442.1">5.20</text>
<text x="1680" y="474.9">5.00</text>
<text x="1680" y="507.8">4.80</text>
<text x="1680" y="540.7">4.60</text>
<text x="1680" y="573.5">4.40</text>
<text x="1680" y="606.4">4.20</text>
<text x="1680" y="660.0">0.40</text>
<text x="1680" y="694.0">0.30</text>
<text x="1680" y="728.0">0.20</text>
<text x="1680" y="762.0">0.10</text>
<text x="1680" y="796.0">-0.00</text>
<text x="1680" y="830.0">-0.10</text>
<text x="1680" y="864.0">-0.20</text>
</g>
<rect x="1635" y="552" width="50" height="15" fill="#000080"/><path d="M1635 551.500h50M1635 567.500h50" stroke="#b40000"/><text x="1635.500" y="563" font-size="13" fill="#fff" shape-rendering="auto">4.42</text>
<g shape-rendering="auto" font-size="12" fill="#d00000"><text x="10" y="944">2022年</text><text x="99" y="944">4</text><text x="518" y="944">5</text><text x="938" y="944">6</text><text x="1402" y="944">7</text></g>
<rect x="1232" y="932" width="84" height="15" fill="#000080"/><path d="M1231.500 932v15M1316.500 932v15" stroke="#a00000" stroke-width="1"/><text x="1233" y="944" font-size="13" fill="#fff" shape-rendering="auto">2022/06/21/二</text>
<text x="1648" y="944" font-size="12" fill="#fff" shape-rendering="auto">日线</text>
<g shape-rendering="auto" fill="none" stroke="#9a9a9a" stroke-width="1"><path d="M1606.500 54l5.500 5.500-5.500 5.500-5.500-5.500z"/><rect x="1619.500" y="54.500" width="11" height="10" rx="2"/><path d="M1627.500 56.500v6" stroke-width="3"/></g>
</svg>
<div class="t" style="top:51.0px;font-size:12px;line-height:16px;color:#fff;left:4px;">特发信息 (日线)</div>
<div class="b" style="left:92px;top:53px;width:12px;height:12px;border-radius:6px;background:#8a8a8a;"></div>
<svg width="110" height="70" viewBox="0 0 110 70" fill="none" stroke="#000" stroke-width="1.3"><path d="M95 58l3 3 3-3"/></svg>
<div class="t" style="top:51.0px;font-size:12px;line-height:16px;color:#fff;left:108px;">默认主图</div>
<div class="t" style="top:51.0px;font-size:12px;line-height:16px;color:#fff;left:161px;letter-spacing:.3px;">MA5: 6.66</div>
<div class="t" style="top:51.0px;font-size:12px;line-height:16px;color:#ff0000;left:224px;letter-spacing:.3px;">MA10: 6.75</div>
<div class="t" style="top:51.0px;font-size:12px;line-height:16px;color:#ffff00;left:294px;letter-spacing:.3px;">MA20: 6.51</div>
<div class="t" style="top:51.0px;font-size:12px;line-height:16px;color:#0000ff;left:363px;letter-spacing:.3px;">MA60: 5.73</div>
<div class="b" style="left:3px;top:640px;width:12px;height:12px;border-radius:6px;background:#8a8a8a;"></div>
<svg width="20" height="660" viewBox="0 0 20 660" fill="none" stroke="#000" stroke-width="1.3"><path d="M6 645l3 3 3-3"/></svg>
<div class="t" style="top:638.0px;font-size:12px;line-height:16px;color:#fff;left:19px;">牛股基因</div>
<div class="t" style="top:638.0px;font-size:12px;line-height:16px;color:#ffff00;left:72px;letter-spacing:.2px;">零轴线: 0.00</div>
<div class="t" style="top:638.0px;font-size:12px;line-height:16px;color:#ff00ff;left:144px;letter-spacing:.2px;">短线做多: 0.22</div>
<div class="t" style="top:638.0px;font-size:12px;line-height:16px;color:#00a0ff;left:228px;letter-spacing:.2px;">短线做空: 0.22</div>
<div class="b" style="left:1685px;top:28px;width:2px;height:920px;background:#3a3a3a;"></div>
<div class="b" style="left:1685px;top:948px;width:3px;height:43px;background:#0b0b0b;"></div>
<div class="b" style="left:1px;top:948px;width:1684px;height:43px;background:#0b0b0b;"></div>
<div class="b" style="left:2px;top:948px;width:1682px;height:18px;background:#1c1c1e;"></div>
<div class="b" style="left:2px;top:967px;width:1682px;height:1px;background:#1a1a1c;"></div>
<div class="b" style="left:37px;top:948px;width:1px;height:18px;background:#0b0b0b;"></div>
<div class="b" style="left:73px;top:948px;width:1px;height:18px;background:#0b0b0b;"></div>
<div class="b" style="left:104px;top:948px;width:1px;height:18px;background:#0b0b0b;"></div>
<div class="b" style="left:160px;top:948px;width:1px;height:18px;background:#0b0b0b;"></div>
<div class="b" style="left:216px;top:948px;width:1px;height:18px;background:#0b0b0b;"></div>
<div class="b" style="left:284px;top:948px;width:1px;height:18px;background:#0b0b0b;"></div>
<div class="b" style="left:340px;top:948px;width:1px;height:18px;background:#0b0b0b;"></div>
<div class="b" style="left:396px;top:948px;width:1px;height:18px;background:#0b0b0b;"></div>
<div class="b" style="left:472px;top:948px;width:1px;height:18px;background:#0b0b0b;"></div>
<div class="b" style="left:540px;top:948px;width:1px;height:18px;background:#0b0b0b;"></div>
<div class="b" style="left:584px;top:948px;width:1px;height:18px;background:#0b0b0b;"></div>
<div class="b" style="left:628px;top:948px;width:1px;height:18px;background:#0b0b0b;"></div>
<div class="b" style="left:672px;top:948px;width:1px;height:18px;background:#0b0b0b;"></div>
<div class="b" style="left:716px;top:948px;width:1px;height:18px;background:#0b0b0b;"></div>
<div class="b" style="left:760px;top:948px;width:1px;height:18px;background:#0b0b0b;"></div>
<div class="b" style="left:792px;top:948px;width:1px;height:18px;background:#0b0b0b;"></div>
<div class="t" style="top:949.0px;font-size:12px;line-height:16px;color:#e6e6e6;left:3px;">指标A</div>
<div class="t" style="top:949.0px;font-size:12px;line-height:16px;color:#e6e6e6;left:39px;">指标B</div>
<div class="t" style="top:949.0px;font-size:12px;line-height:16px;color:#e6e6e6;left:76px;">窗口</div>
<div class="t" style="top:949.0px;font-size:12px;line-height:16px;color:#e6e6e6;left:108px;">北上资金</div>
<div class="t" style="top:949.0px;font-size:12px;line-height:16px;color:#e6e6e6;left:164px;">两融资金</div>
<div class="t" style="top:949.0px;font-size:12px;line-height:16px;color:#e6e6e6;left:220px;">增减持资金</div>
<div class="t" style="top:949.0px;font-size:12px;line-height:16px;color:#e6e6e6;left:288px;">打板资金</div>
<div class="t" style="top:949.0px;font-size:12px;line-height:16px;color:#e6e6e6;left:344px;">上榜资金</div>
<div class="t" style="top:949.0px;font-size:12px;line-height:16px;color:#e6e6e6;left:400px;">沪深ETF资金</div>
<div class="t" style="top:949.0px;font-size:12px;line-height:16px;color:#e6e6e6;left:476px;">沪深涨跌停</div>
<div class="t" style="top:949.0px;font-size:12px;line-height:16px;color:#e6e6e6;left:544px;">散户线</div>
<div class="t" style="top:949.0px;font-size:12px;line-height:16px;color:#e6e6e6;left:588px;">市盈率</div>
<div class="t" style="top:949.0px;font-size:12px;line-height:16px;color:#e6e6e6;left:632px;">市净率</div>
<div class="t" style="top:949.0px;font-size:12px;line-height:16px;color:#e6e6e6;left:676px;">市销率</div>
<div class="t" style="top:949.0px;font-size:12px;line-height:16px;color:#e6e6e6;left:720px;">市现率</div>
<div class="t" style="top:949.0px;font-size:12px;line-height:16px;color:#ff3c3c;left:764px;">更多</div>
<div class="b" style="left:1598px;top:948px;width:1px;height:18px;background:#0b0b0b;"></div>
<div class="b" style="left:1634px;top:948px;width:1px;height:18px;background:#0b0b0b;"></div>
<div class="b" style="left:1659px;top:948px;width:1px;height:18px;background:#0b0b0b;"></div>
<div class="t" style="top:949.0px;font-size:12px;line-height:16px;color:#e6e6e6;left:1603px;">模 板</div>
<div class="t" style="top:947.0px;font-size:14px;line-height:18px;color:#e6e6e6;left:1447px;width:400px;text-align:center;">+</div>
<div class="t" style="top:947.0px;font-size:14px;line-height:18px;color:#e6e6e6;left:1472px;width:400px;text-align:center;">−</div>
<div class="b" style="left:2px;top:969px;width:1682px;height:21px;background:#1c1c1e;"></div>
<div class="b" style="left:22px;top:969px;width:1px;height:21px;background:#0b0b0b;"></div>
<div class="b" style="left:84px;top:969px;width:1px;height:21px;background:#0b0b0b;"></div>
<div class="b" style="left:146px;top:969px;width:1px;height:21px;background:#0b0b0b;"></div>
<div class="b" style="left:208px;top:969px;width:1px;height:21px;background:#0b0b0b;"></div>
<div class="b" style="left:270px;top:969px;width:1px;height:21px;background:#0b0b0b;"></div>
<div class="b" style="left:332px;top:969px;width:1px;height:21px;background:#0b0b0b;"></div>
<div class="b" style="left:394px;top:969px;width:1px;height:21px;background:#0b0b0b;"></div>
<div class="b" style="left:456px;top:969px;width:1px;height:21px;background:#0b0b0b;"></div>
<div class="b" style="left:518px;top:969px;width:1px;height:21px;background:#0b0b0b;"></div>
<div class="b" style="left:580px;top:969px;width:1px;height:21px;background:#0b0b0b;"></div>
<div class="b" style="left:642px;top:969px;width:1px;height:21px;background:#0b0b0b;"></div>
<div class="b" style="left:1634px;top:969px;width:1px;height:21px;background:#0b0b0b;"></div>
<svg width="30" height="1000" viewBox="0 0 30 1000" fill="none" stroke="#8c8c8c" stroke-width="1"><rect x="6.500" y="973.500" width="11" height="11" rx="2"/><path d="M8.500 976.700h7" stroke-width="2.400"/></svg>
<div class="t" style="top:971.5px;font-size:12px;line-height:16px;color:#e6e6e6;left:-146px;width:400px;text-align:center;word-spacing:-2px;">关联报价</div>
<div class="t" style="top:971.5px;font-size:12px;line-height:16px;color:#e6e6e6;left:-84px;width:400px;text-align:center;word-spacing:-2px;">资金流向</div>
<div class="t" style="top:971.5px;font-size:12px;line-height:16px;color:#e6e6e6;left:-22px;width:400px;text-align:center;word-spacing:-2px;">主力轨迹</div>
<div class="t" style="top:971.5px;font-size:12px;line-height:16px;color:#e6e6e6;left:40px;width:400px;text-align:center;word-spacing:-2px;">相似 K 线</div>
<div class="t" style="top:971.5px;font-size:12px;line-height:16px;color:#e6e6e6;left:102px;width:400px;text-align:center;word-spacing:-2px;">逐笔委托</div>
<div class="t" style="top:971.5px;font-size:12px;line-height:16px;color:#ff9a1e;left:164px;width:400px;text-align:center;word-spacing:-2px;">综合资讯</div>
<div class="t" style="top:971.5px;font-size:12px;line-height:16px;color:#e6e6e6;left:226px;width:400px;text-align:center;word-spacing:-2px;">行业数据</div>
<div class="t" style="top:971.5px;font-size:12px;line-height:16px;color:#ff9a1e;left:288px;width:400px;text-align:center;word-spacing:-2px;">互动问答</div>
<div class="t" style="top:971.5px;font-size:12px;line-height:16px;color:#ff9a1e;left:350px;width:400px;text-align:center;word-spacing:-2px;">机构调研</div>
<div class="t" style="top:971.5px;font-size:12px;line-height:16px;color:#e6e6e6;left:412px;width:400px;text-align:center;word-spacing:-2px;">扫雷宝</div>
<div class="t" style="top:971.5px;font-size:12px;line-height:16px;color:#c8c800;left:1460px;width:400px;text-align:center;">侧边栏</div>
<div class="b" style="left:0px;top:991px;width:1920px;height:22px;background:#232830;"></div>
<div class="b" style="left:0px;top:1013px;width:1920px;height:27px;background:#1b1f27;"></div>
<div class="b" style="left:0px;top:1040px;width:1920px;height:2px;background:#3a3c2c;"></div>
<div class="b" style="left:1687px;top:28px;width:233px;height:944px;background:#000;"></div>
<svg width="1920" height="990" viewBox="0 0 1920 990"><g><text transform="translate(1714.8,180.5) rotate(-45)" font-size="24" fill="#ffffff" fill-opacity="0.115">www.cfchi.com</text><text transform="translate(1714.8,361.1) rotate(-45)" font-size="24" fill="#ffffff" fill-opacity="0.115">www.cfchi.com</text><text transform="translate(1714.8,541.7) rotate(-45)" font-size="24" fill="#ffffff" fill-opacity="0.115">www.cfchi.com</text><text transform="translate(1714.8,722.3) rotate(-45)" font-size="24" fill="#ffffff" fill-opacity="0.115">www.cfchi.com</text><text transform="translate(1714.8,902.9) rotate(-45)" font-size="24" fill="#ffffff" fill-opacity="0.115">www.cfchi.com</text></g></svg>
<div class="t" style="top:33.0px;font-size:15px;line-height:19px;color:#e6e600;left:1693px;">特发信息</div>
<div class="t" style="top:33.0px;font-size:15px;line-height:19px;color:#f0f0f0;left:1757px;">000070</div>
<div class="t" style="top:35.0px;font-size:10px;line-height:14px;color:#ff4040;left:1816px;">L</div>
<div class="t" style="top:35.0px;font-size:10px;line-height:14px;color:#ff4040;font-weight:bold;left:1825px;">R</div>
<div class="t" style="top:35.0px;font-size:10px;line-height:14px;color:#ff4040;left:1832px;transform:scaleX(0.8);transform-origin:left center;">I000</div>
<div class="b" style="left:1865px;top:33px;width:49px;height:48px;background:#1e1e1e;"></div>
<div class="t" style="top:36.5px;font-size:12px;line-height:16px;color:#f0f0f0;left:1689.5px;width:400px;text-align:center;">通信设备</div>
<div class="t" style="top:60.5px;font-size:12px;line-height:16px;color:#00cc00;left:1689.5px;width:400px;text-align:center;">-1.21%</div>
<div class="t" style="top:56.5px;font-size:18px;line-height:22px;color:#00cc00;font-weight:bold;left:1693px;">6.62</div>
<div class="t" style="top:59.0px;font-size:14px;line-height:18px;color:#00cc00;left:1737px;">-0.09</div>
<div class="t" style="top:59.0px;font-size:14px;line-height:18px;color:#00cc00;left:1778px;">-1.34%</div>
<div class="b" style="left:1694px;top:86px;width:51px;height:22px;border:1px solid #e03c3c;box-sizing:border-box;"></div>
<div class="t" style="top:88.5px;font-size:13px;line-height:17px;color:#ff4040;left:1519.5px;width:400px;text-align:center;">买</div>
<div class="b" style="left:1750px;top:86px;width:51px;height:22px;border:1px solid #3c8ce0;box-sizing:border-box;"></div>
<div class="t" style="top:88.5px;font-size:13px;line-height:17px;color:#4a9cf0;left:1575.5px;width:400px;text-align:center;">卖</div>
<div class="b" style="left:1806px;top:86px;width:51px;height:22px;border:1px solid #7a7a7a;box-sizing:border-box;"></div>
<div class="t" style="top:88.5px;font-size:13px;line-height:17px;color:#cfcfcf;left:1631.5px;width:400px;text-align:center;">查</div>
<div class="b" style="left:1862px;top:86px;width:51px;height:22px;border:1px solid #7a7a7a;box-sizing:border-box;"></div>
<div class="t" style="top:88.5px;font-size:13px;line-height:17px;color:#cfcfcf;left:1687.5px;width:400px;text-align:center;">警</div>
<div class="b" style="left:1687px;top:113px;width:233px;height:1px;background:#900000;"></div>
<div class="t" style="top:113.5px;font-size:14px;line-height:18px;color:#f0f0f0;left:1695px;">卖五</div>
<div class="t" style="top:112.5px;line-height:20px;color:#00cc00;font-size:14px;right:124px;"><span class="n" style="font-size:15px;transform:scaleX(0.91);margin-right:-2.63px">6.66</span></div>
<div class="t" style="top:112.5px;line-height:20px;color:#c8c800;font-size:14px;right:57px;"><span class="n" style="font-size:15px;transform:scaleX(0.91);margin-right:-2.25px">101</span></div>
<div class="t" style="top:131.5px;font-size:14px;line-height:18px;color:#f0f0f0;left:1695px;">卖四</div>
<div class="t" style="top:130.5px;line-height:20px;color:#00cc00;font-size:14px;right:124px;"><span class="n" style="font-size:15px;transform:scaleX(0.91);margin-right:-2.63px">6.65</span></div>
<div class="t" style="top:130.5px;line-height:20px;color:#c8c800;font-size:14px;right:57px;"><span class="n" style="font-size:15px;transform:scaleX(0.91);margin-right:-2.25px">166</span></div>
<div class="t" style="top:149.5px;font-size:14px;line-height:18px;color:#f0f0f0;left:1695px;">卖三</div>
<div class="t" style="top:148.5px;line-height:20px;color:#00cc00;font-size:14px;right:124px;"><span class="n" style="font-size:15px;transform:scaleX(0.91);margin-right:-2.63px">6.64</span></div>
<div class="t" style="top:148.5px;line-height:20px;color:#c8c800;font-size:14px;right:57px;"><span class="n" style="font-size:15px;transform:scaleX(0.91);margin-right:-1.50px">28</span></div>
<div class="t" style="top:167.5px;font-size:14px;line-height:18px;color:#f0f0f0;left:1695px;">卖二</div>
<div class="t" style="top:166.5px;line-height:20px;color:#00cc00;font-size:14px;right:124px;"><span class="n" style="font-size:15px;transform:scaleX(0.91);margin-right:-2.63px">6.63</span></div>
<div class="t" style="top:166.5px;line-height:20px;color:#c8c800;font-size:14px;right:57px;"><span class="n" style="font-size:15px;transform:scaleX(0.91);margin-right:-2.25px">379</span></div>
<div class="t" style="top:185.5px;font-size:14px;line-height:18px;color:#f0f0f0;left:1695px;">卖一</div>
<div class="t" style="top:184.5px;line-height:20px;color:#00cc00;font-size:14px;right:124px;"><span class="n" style="font-size:15px;transform:scaleX(0.91);margin-right:-2.63px">6.62</span></div>
<div class="t" style="top:184.5px;line-height:20px;color:#c8c800;font-size:14px;right:57px;"><span class="n" style="font-size:15px;transform:scaleX(0.91);margin-right:-1.50px">77</span></div>
<div class="t" style="top:205.5px;font-size:14px;line-height:18px;color:#f0f0f0;left:1695px;">买一</div>
<div class="t" style="top:204.5px;line-height:20px;color:#00cc00;font-size:14px;right:124px;"><span class="n" style="font-size:15px;transform:scaleX(0.91);margin-right:-2.63px">6.61</span></div>
<div class="t" style="top:204.5px;line-height:20px;color:#c8c800;font-size:14px;right:57px;"><span class="n" style="font-size:15px;transform:scaleX(0.91);margin-right:-2.25px">127</span></div>
<div class="t" style="top:223.5px;font-size:14px;line-height:18px;color:#f0f0f0;left:1695px;">买二</div>
<div class="t" style="top:222.5px;line-height:20px;color:#00cc00;font-size:14px;right:124px;"><span class="n" style="font-size:15px;transform:scaleX(0.91);margin-right:-2.63px">6.60</span></div>
<div class="t" style="top:222.5px;line-height:20px;color:#c8c800;font-size:14px;right:57px;"><span class="n" style="font-size:15px;transform:scaleX(0.91);margin-right:-2.25px">289</span></div>
<div class="t" style="top:241.5px;font-size:14px;line-height:18px;color:#f0f0f0;left:1695px;">买三</div>
<div class="t" style="top:240.5px;line-height:20px;color:#00cc00;font-size:14px;right:124px;"><span class="n" style="font-size:15px;transform:scaleX(0.91);margin-right:-2.63px">6.59</span></div>
<div class="t" style="top:240.5px;line-height:20px;color:#c8c800;font-size:14px;right:57px;"><span class="n" style="font-size:15px;transform:scaleX(0.91);margin-right:-2.25px">344</span></div>
<div class="t" style="top:259.5px;font-size:14px;line-height:18px;color:#f0f0f0;left:1695px;">买四</div>
<div class="t" style="top:258.5px;line-height:20px;color:#00cc00;font-size:14px;right:124px;"><span class="n" style="font-size:15px;transform:scaleX(0.91);margin-right:-2.63px">6.58</span></div>
<div class="t" style="top:258.5px;line-height:20px;color:#c8c800;font-size:14px;right:57px;"><span class="n" style="font-size:15px;transform:scaleX(0.91);margin-right:-2.25px">797</span></div>
<div class="t" style="top:277.5px;font-size:14px;line-height:18px;color:#f0f0f0;left:1695px;">买五</div>
<div class="t" style="top:276.5px;line-height:20px;color:#00cc00;font-size:14px;right:124px;"><span class="n" style="font-size:15px;transform:scaleX(0.91);margin-right:-2.63px">6.57</span></div>
<div class="t" style="top:276.5px;line-height:20px;color:#c8c800;font-size:14px;right:57px;"><span class="n" style="font-size:15px;transform:scaleX(0.91);margin-right:-2.25px">210</span></div>
<div class="b" style="left:1687px;top:204px;width:162px;height:1px;background:#d08a1e;"></div>
<div class="b" style="left:1849px;top:204px;width:71px;height:1px;background:#3a84d8;"></div>
<div class="b" style="left:1687px;top:297px;width:233px;height:1px;background:#900000;"></div>
<div class="t" style="top:299.0px;font-size:14px;line-height:18px;color:#f0f0f0;left:1695px;">涨停</div>
<div class="t" style="top:298.0px;line-height:20px;color:#ff4040;font-size:14px;right:124px;"><span class="n" style="font-size:15px;transform:scaleX(0.91);margin-right:-2.63px">7.38</span></div>
<div class="t" style="top:299.0px;font-size:14px;line-height:18px;color:#f0f0f0;left:1811px;">跌停</div>
<div class="t" style="top:298.0px;line-height:20px;color:#00cc00;font-size:14px;right:8px;"><span class="n" style="font-size:15px;transform:scaleX(0.91);margin-right:-2.63px">6.04</span></div>
<div class="t" style="top:317.9px;font-size:14px;line-height:18px;color:#f0f0f0;left:1695px;">最高</div>
<div class="t" style="top:316.9px;line-height:20px;color:#ff4040;font-size:14px;right:124px;"><span class="n" style="font-size:15px;transform:scaleX(0.91);margin-right:-2.63px">6.87</span></div>
<div class="t" style="top:317.9px;font-size:14px;line-height:18px;color:#f0f0f0;left:1811px;">量比</div>
<div class="t" style="top:316.9px;line-height:20px;color:#00cc00;font-size:14px;right:8px;"><span class="n" style="font-size:15px;transform:scaleX(0.91);margin-right:-2.63px">0.73</span></div>
<div class="t" style="top:336.8px;font-size:14px;line-height:18px;color:#f0f0f0;left:1695px;">最低</div>
<div class="t" style="top:335.8px;line-height:20px;color:#00cc00;font-size:14px;right:124px;"><span class="n" style="font-size:15px;transform:scaleX(0.91);margin-right:-2.63px">6.51</span></div>
<div class="t" style="top:336.8px;font-size:14px;line-height:18px;color:#f0f0f0;left:1811px;">市值</div>
<div class="t" style="top:335.8px;line-height:20px;color:#f0f0f0;font-size:14px;right:8px;"><span class="n" style="font-size:15px;transform:scaleX(0.91);margin-right:-2.63px">55.9</span><span style="font-size:14px">亿</span></div>
<div class="t" style="top:355.7px;font-size:14px;line-height:18px;color:#f0f0f0;left:1695px;">现量</div>
<div class="t" style="top:354.7px;line-height:20px;color:#ff4040;font-size:14px;right:124px;"><span class="n" style="font-size:15px;transform:scaleX(0.91);margin-right:-1.50px">12</span></div>
<div class="t" style="top:355.7px;font-size:14px;line-height:18px;color:#f0f0f0;left:1811px;">总量</div>
<div class="t" style="top:354.7px;line-height:20px;color:#f0f0f0;font-size:14px;right:8px;"><span class="n" style="font-size:15px;transform:scaleX(0.91);margin-right:-4.50px">153661</span></div>
<div class="t" style="top:374.6px;font-size:14px;line-height:18px;color:#f0f0f0;left:1695px;">外盘</div>
<div class="t" style="top:373.6px;line-height:20px;color:#ff4040;font-size:14px;right:124px;"><span class="n" style="font-size:15px;transform:scaleX(0.91);margin-right:-3.75px">69261</span></div>
<div class="t" style="top:374.6px;font-size:14px;line-height:18px;color:#f0f0f0;left:1811px;">内盘</div>
<div class="t" style="top:373.6px;line-height:20px;color:#00cc00;font-size:14px;right:8px;"><span class="n" style="font-size:15px;transform:scaleX(0.91);margin-right:-3.75px">84400</span></div>
<div class="b" style="left:1687px;top:394px;width:233px;height:1px;background:#900000;"></div>
<div class="t" style="top:395.5px;line-height:20px;color:#f0f0f0;font-size:14px;left:1695px;"><span style="font-size:14px">换手</span></div>
<div class="t" style="top:395.5px;line-height:20px;color:#f0f0f0;font-size:14px;right:124px;"><span class="n" style="font-size:15px;transform:scaleX(0.91);margin-right:-3.83px">1.85%</span></div>
<div class="t" style="top:395.5px;line-height:20px;color:#f0f0f0;font-size:14px;left:1811px;"><span style="font-size:14px">股本</span></div>
<div class="t" style="top:395.5px;line-height:20px;color:#f0f0f0;font-size:14px;right:8px;"><span class="n" style="font-size:15px;transform:scaleX(0.91);margin-right:-2.63px">8.45</span><span style="font-size:14px">亿</span></div>
<div class="t" style="top:414.2px;line-height:20px;color:#f0f0f0;font-size:14px;left:1695px;"><span style="font-size:14px">净资</span></div>
<div class="t" style="top:414.2px;line-height:20px;color:#f0f0f0;font-size:14px;right:124px;"><span class="n" style="font-size:15px;transform:scaleX(0.91);margin-right:-2.63px">2.26</span></div>
<div class="t" style="top:414.2px;line-height:20px;color:#f0f0f0;font-size:14px;left:1811px;"><span style="font-size:14px">流通</span></div>
<div class="t" style="top:414.2px;line-height:20px;color:#f0f0f0;font-size:14px;right:8px;"><span class="n" style="font-size:15px;transform:scaleX(0.91);margin-right:-2.63px">8.33</span><span style="font-size:14px">亿</span></div>
<div class="t" style="top:432.9px;line-height:20px;color:#f0f0f0;font-size:14px;left:1695px;"><span style="font-size:14px">收益</span><span class="n" style="font-size:15px;transform:scaleX(0.91);margin-right:-0.75px">(</span><span style="font-size:14px">–</span><span class="n" style="font-size:15px;transform:scaleX(0.91);margin-right:-0.75px">)</span></div>
<div class="t" style="top:432.9px;line-height:20px;color:#f0f0f0;font-size:14px;right:124px;"><span class="n" style="font-size:15px;transform:scaleX(0.91);margin-right:-3.38px">0.010</span></div>
<div class="t" style="top:432.9px;line-height:20px;color:#f0f0f0;font-size:14px;left:1811px;"><span class="n" style="font-size:15px;transform:scaleX(0.91);margin-right:-2.25px">PE(</span><span style="font-size:14px">动</span><span class="n" style="font-size:15px;transform:scaleX(0.91);margin-right:-0.75px">)</span></div>
<div class="t" style="top:432.9px;line-height:20px;color:#f0f0f0;font-size:14px;right:8px;"><span class="n" style="font-size:15px;transform:scaleX(0.91);margin-right:-3.38px">197.3</span></div>
<div class="b" style="left:1687px;top:457px;width:233px;height:1px;background:#900000;"></div>
<div class="t" style="top:458.0px;line-height:20px;color:#f0f0f0;font-size:14px;left:1694px;"><span style="font-size:14px">交易状态</span><span class="n" style="font-size:15px;transform:scaleX(0.91);margin-right:-0.75px">: </span><span style="font-size:14px">连续竞价</span><span class="n" style="font-size:15px;transform:scaleX(0.91);margin-right:-5.63px"> 14:25:36</span></div>
<div class="b" style="left:1687px;top:479px;width:233px;height:1px;background:#900000;"></div>
<div class="t" style="top:479.0px;line-height:20px;color:#f0f0f0;font-size:14px;left:1695px;"><span style="font-size:14px">净流入额</span></div>
<div class="b" style="left:1787px;top:485.5px;width:22px;height:7px;background:#00cc00;"></div>
<div class="t" style="top:479.0px;line-height:20px;color:#00cc00;font-size:14px;right:47px;"><span class="n" style="font-size:15px;transform:scaleX(0.91);margin-right:-3.83px">-987.1</span><span style="font-size:14px">万</span></div>
<div class="t" style="top:479.0px;line-height:20px;color:#00cc00;font-size:14px;right:8px;"><span class="n" style="font-size:15px;transform:scaleX(0.91);margin-right:-3.15px">-10%</span></div>
<div class="t" style="top:498.0px;line-height:20px;color:#f0f0f0;font-size:14px;left:1695px;"><span style="font-size:14px">大宗流入</span></div>
<div class="b" style="left:1787px;top:504.5px;width:1px;height:7px;background:#00cc00;"></div>
<div class="t" style="top:498.0px;line-height:20px;color:#00cc00;font-size:14px;right:47px;"><span class="n" style="font-size:15px;transform:scaleX(0.91);margin-right:-3.08px">-58.3</span><span style="font-size:14px">万</span></div>
<div class="t" style="top:498.0px;line-height:20px;color:#00cc00;font-size:14px;right:8px;"><span class="n" style="font-size:15px;transform:scaleX(0.91);margin-right:-2.40px">-1%</span></div>
<div class="t" style="top:517.0px;line-height:20px;color:#f0f0f0;font-size:14px;left:1695px;"><span class="n" style="font-size:15px;transform:scaleX(0.91);margin-right:-0.75px">5</span><span style="font-size:14px">日净流入额</span></div>
<div class="b" style="left:1787px;top:523.5px;width:18px;height:7px;background:#00cc00;"></div>
<div class="t" style="top:517.0px;line-height:20px;color:#00cc00;font-size:14px;right:47px;"><span class="n" style="font-size:15px;transform:scaleX(0.91);margin-right:-3.83px">-839.5</span><span style="font-size:14px">万</span></div>
<div class="t" style="top:517.0px;line-height:20px;color:#00cc00;font-size:14px;right:8px;"><span class="n" style="font-size:15px;transform:scaleX(0.91);margin-right:-2.40px">-1%</span></div>
<div class="t" style="top:536.0px;line-height:20px;color:#f0f0f0;font-size:14px;left:1695px;"><span class="n" style="font-size:15px;transform:scaleX(0.91);margin-right:-0.75px">5</span><span style="font-size:14px">日大宗流入</span></div>
<div class="b" style="left:1787px;top:542.5px;width:12px;height:7px;background:#00cc00;"></div>
<div class="t" style="top:536.0px;line-height:20px;color:#00cc00;font-size:14px;right:47px;"><span class="n" style="font-size:15px;transform:scaleX(0.91);margin-right:-3.83px">-560.9</span><span style="font-size:14px">万</span></div>
<div class="t" style="top:536.0px;line-height:20px;color:#00cc00;font-size:14px;right:8px;"><span class="n" style="font-size:15px;transform:scaleX(0.91);margin-right:-2.40px">-1%</span></div>
<div class="b" style="left:1687px;top:558px;width:233px;height:1px;background:#900000;"></div>
<div class="t" style="top:558.0px;line-height:20px;color:#f0f0f0;font-size:14px;left:1695px;"><span class="n" style="font-size:15px;transform:scaleX(0.91);margin-right:-3.38px">14:22</span></div>
<div class="t" style="top:558.0px;line-height:20px;color:#00cc00;font-size:14px;right:121px;"><span class="n" style="font-size:15px;transform:scaleX(0.91);margin-right:-2.63px">6.63</span></div>
<div class="t" style="top:558.0px;line-height:20px;color:#c8c800;font-size:14px;right:61px;"><span class="n" style="font-size:15px;transform:scaleX(0.91);margin-right:-0.75px">7</span></div>
<div class="t" style="top:558.0px;line-height:20px;color:#00cc00;font-size:14px;left:1872px;"><span class="n" style="font-size:15px;transform:scaleX(0.91);margin-right:-0.90px">S</span></div>
<div class="t" style="top:558.0px;line-height:20px;color:#b0b0b0;font-size:14px;right:8px;"><span class="n" style="font-size:15px;transform:scaleX(0.91);margin-right:-0.75px">3</span></div>
<div class="t" style="top:576.0px;line-height:20px;color:#f0f0f0;font-size:14px;left:1695px;"><span class="n" style="font-size:15px;transform:scaleX(0.91);margin-right:-3.38px">14:23</span></div>
<div class="t" style="top:576.0px;line-height:20px;color:#00cc00;font-size:14px;right:121px;"><span class="n" style="font-size:15px;transform:scaleX(0.91);margin-right:-2.63px">6.62</span></div>
<div class="t" style="top:576.0px;line-height:20px;color:#c8c800;font-size:14px;right:61px;"><span class="n" style="font-size:15px;transform:scaleX(0.91);margin-right:-1.50px">14</span></div>
<div class="t" style="top:576.0px;line-height:20px;color:#00cc00;font-size:14px;left:1872px;"><span class="n" style="font-size:15px;transform:scaleX(0.91);margin-right:-0.90px">S</span></div>
<div class="t" style="top:576.0px;line-height:20px;color:#b0b0b0;font-size:14px;right:8px;"><span class="n" style="font-size:15px;transform:scaleX(0.91);margin-right:-0.75px">1</span></div>
<div class="t" style="top:594.0px;line-height:20px;color:#f0f0f0;font-size:14px;left:1695px;"><span class="n" style="font-size:15px;transform:scaleX(0.91);margin-right:-3.38px">14:23</span></div>
<div class="t" style="top:594.0px;line-height:20px;color:#00cc00;font-size:14px;right:121px;"><span class="n" style="font-size:15px;transform:scaleX(0.91);margin-right:-2.63px">6.63</span></div>
<div class="t" style="top:594.0px;line-height:20px;color:#c8c800;font-size:14px;right:61px;"><span class="n" style="font-size:15px;transform:scaleX(0.91);margin-right:-0.75px">4</span></div>
<div class="t" style="top:594.0px;line-height:20px;color:#ff4040;font-size:14px;left:1872px;"><span class="n" style="font-size:15px;transform:scaleX(0.91);margin-right:-0.90px">B</span></div>
<div class="t" style="top:594.0px;line-height:20px;color:#b0b0b0;font-size:14px;right:8px;"><span class="n" style="font-size:15px;transform:scaleX(0.91);margin-right:-0.75px">2</span></div>
<div class="t" style="top:612.0px;line-height:20px;color:#f0f0f0;font-size:14px;left:1695px;"><span class="n" style="font-size:15px;transform:scaleX(0.91);margin-right:-3.38px">14:23</span></div>
<div class="t" style="top:612.0px;line-height:20px;color:#00cc00;font-size:14px;right:121px;"><span class="n" style="font-size:15px;transform:scaleX(0.91);margin-right:-2.63px">6.62</span></div>
<div class="t" style="top:612.0px;line-height:20px;color:#c8c800;font-size:14px;right:61px;"><span class="n" style="font-size:15px;transform:scaleX(0.91);margin-right:-1.50px">17</span></div>
<div class="t" style="top:612.0px;line-height:20px;color:#00cc00;font-size:14px;left:1872px;"><span class="n" style="font-size:15px;transform:scaleX(0.91);margin-right:-0.90px">S</span></div>
<div class="t" style="top:612.0px;line-height:20px;color:#b0b0b0;font-size:14px;right:8px;"><span class="n" style="font-size:15px;transform:scaleX(0.91);margin-right:-0.75px">2</span></div>
<div class="t" style="top:630.0px;line-height:20px;color:#f0f0f0;font-size:14px;left:1695px;"><span class="n" style="font-size:15px;transform:scaleX(0.91);margin-right:-3.38px">14:23</span></div>
<div class="t" style="top:630.0px;line-height:20px;color:#00cc00;font-size:14px;right:121px;"><span class="n" style="font-size:15px;transform:scaleX(0.91);margin-right:-2.63px">6.63</span></div>
<div class="t" style="top:630.0px;line-height:20px;color:#c8c800;font-size:14px;right:61px;"><span class="n" style="font-size:15px;transform:scaleX(0.91);margin-right:-1.50px">52</span></div>
<div class="t" style="top:630.0px;line-height:20px;color:#ff4040;font-size:14px;left:1872px;"><span class="n" style="font-size:15px;transform:scaleX(0.91);margin-right:-0.90px">B</span></div>
<div class="t" style="top:630.0px;line-height:20px;color:#b0b0b0;font-size:14px;right:8px;"><span class="n" style="font-size:15px;transform:scaleX(0.91);margin-right:-0.75px">4</span></div>
<div class="t" style="top:648.0px;line-height:20px;color:#f0f0f0;font-size:14px;left:1695px;"><span class="n" style="font-size:15px;transform:scaleX(0.91);margin-right:-3.38px">14:23</span></div>
<div class="t" style="top:648.0px;line-height:20px;color:#00cc00;font-size:14px;right:121px;"><span class="n" style="font-size:15px;transform:scaleX(0.91);margin-right:-2.63px">6.62</span></div>
<div class="t" style="top:648.0px;line-height:20px;color:#c8c800;font-size:14px;right:61px;"><span class="n" style="font-size:15px;transform:scaleX(0.91);margin-right:-1.50px">65</span></div>
<div class="t" style="top:648.0px;line-height:20px;color:#00cc00;font-size:14px;left:1872px;"><span class="n" style="font-size:15px;transform:scaleX(0.91);margin-right:-0.90px">S</span></div>
<div class="t" style="top:648.0px;line-height:20px;color:#b0b0b0;font-size:14px;right:8px;"><span class="n" style="font-size:15px;transform:scaleX(0.91);margin-right:-0.75px">3</span></div>
<div class="t" style="top:666.0px;line-height:20px;color:#f0f0f0;font-size:14px;left:1695px;"><span class="n" style="font-size:15px;transform:scaleX(0.91);margin-right:-3.38px">14:23</span></div>
<div class="t" style="top:666.0px;line-height:20px;color:#00cc00;font-size:14px;right:121px;"><span class="n" style="font-size:15px;transform:scaleX(0.91);margin-right:-2.63px">6.62</span></div>
<div class="t" style="top:666.0px;line-height:20px;color:#c8c800;font-size:14px;right:61px;"><span class="n" style="font-size:15px;transform:scaleX(0.91);margin-right:-1.50px">63</span></div>
<div class="t" style="top:666.0px;line-height:20px;color:#00cc00;font-size:14px;left:1872px;"><span class="n" style="font-size:15px;transform:scaleX(0.91);margin-right:-0.90px">S</span></div>
<div class="t" style="top:666.0px;line-height:20px;color:#b0b0b0;font-size:14px;right:8px;"><span class="n" style="font-size:15px;transform:scaleX(0.91);margin-right:-0.75px">1</span></div>
<div class="t" style="top:684.0px;line-height:20px;color:#f0f0f0;font-size:14px;left:1695px;"><span class="n" style="font-size:15px;transform:scaleX(0.91);margin-right:-3.38px">14:23</span></div>
<div class="t" style="top:684.0px;line-height:20px;color:#00cc00;font-size:14px;right:121px;"><span class="n" style="font-size:15px;transform:scaleX(0.91);margin-right:-2.63px">6.62</span></div>
<div class="t" style="top:684.0px;line-height:20px;color:#c8c800;font-size:14px;right:61px;"><span class="n" style="font-size:15px;transform:scaleX(0.91);margin-right:-2.25px">108</span></div>
<div class="t" style="top:684.0px;line-height:20px;color:#00cc00;font-size:14px;left:1872px;"><span class="n" style="font-size:15px;transform:scaleX(0.91);margin-right:-0.90px">S</span></div>
<div class="t" style="top:684.0px;line-height:20px;color:#b0b0b0;font-size:14px;right:8px;"><span class="n" style="font-size:15px;transform:scaleX(0.91);margin-right:-0.75px">4</span></div>
<div class="t" style="top:702.0px;line-height:20px;color:#f0f0f0;font-size:14px;left:1695px;"><span class="n" style="font-size:15px;transform:scaleX(0.91);margin-right:-3.38px">14:23</span></div>
<div class="t" style="top:702.0px;line-height:20px;color:#00cc00;font-size:14px;right:121px;"><span class="n" style="font-size:15px;transform:scaleX(0.91);margin-right:-2.63px">6.62</span></div>
<div class="t" style="top:702.0px;line-height:20px;color:#c8c800;font-size:14px;right:61px;"><span class="n" style="font-size:15px;transform:scaleX(0.91);margin-right:-2.25px">121</span></div>
<div class="t" style="top:702.0px;line-height:20px;color:#00cc00;font-size:14px;left:1872px;"><span class="n" style="font-size:15px;transform:scaleX(0.91);margin-right:-0.90px">S</span></div>
<div class="t" style="top:702.0px;line-height:20px;color:#b0b0b0;font-size:14px;right:8px;"><span class="n" style="font-size:15px;transform:scaleX(0.91);margin-right:-0.75px">8</span></div>
<div class="t" style="top:720.0px;line-height:20px;color:#f0f0f0;font-size:14px;left:1695px;"><span class="n" style="font-size:15px;transform:scaleX(0.91);margin-right:-3.38px">14:23</span></div>
<div class="t" style="top:720.0px;line-height:20px;color:#00cc00;font-size:14px;right:121px;"><span class="n" style="font-size:15px;transform:scaleX(0.91);margin-right:-2.63px">6.62</span></div>
<div class="t" style="top:720.0px;line-height:20px;color:#c8c800;font-size:14px;right:61px;"><span class="n" style="font-size:15px;transform:scaleX(0.91);margin-right:-1.50px">18</span></div>
<div class="t" style="top:720.0px;line-height:20px;color:#00cc00;font-size:14px;left:1872px;"><span class="n" style="font-size:15px;transform:scaleX(0.91);margin-right:-0.90px">S</span></div>
<div class="t" style="top:720.0px;line-height:20px;color:#b0b0b0;font-size:14px;right:8px;"><span class="n" style="font-size:15px;transform:scaleX(0.91);margin-right:-0.75px">1</span></div>
<div class="t" style="top:738.0px;line-height:20px;color:#f0f0f0;font-size:14px;left:1695px;"><span class="n" style="font-size:15px;transform:scaleX(0.91);margin-right:-3.38px">14:23</span></div>
<div class="t" style="top:738.0px;line-height:20px;color:#00cc00;font-size:14px;right:121px;"><span class="n" style="font-size:15px;transform:scaleX(0.91);margin-right:-2.63px">6.62</span></div>
<div class="t" style="top:738.0px;line-height:20px;color:#c8c800;font-size:14px;right:61px;"><span class="n" style="font-size:15px;transform:scaleX(0.91);margin-right:-0.75px">5</span></div>
<div class="t" style="top:738.0px;line-height:20px;color:#00cc00;font-size:14px;left:1872px;"><span class="n" style="font-size:15px;transform:scaleX(0.91);margin-right:-0.90px">S</span></div>
<div class="t" style="top:738.0px;line-height:20px;color:#b0b0b0;font-size:14px;right:8px;"><span class="n" style="font-size:15px;transform:scaleX(0.91);margin-right:-0.75px">1</span></div>
<div class="t" style="top:756.0px;line-height:20px;color:#f0f0f0;font-size:14px;left:1695px;"><span class="n" style="font-size:15px;transform:scaleX(0.91);margin-right:-3.38px">14:23</span></div>
<div class="t" style="top:756.0px;line-height:20px;color:#00cc00;font-size:14px;right:121px;"><span class="n" style="font-size:15px;transform:scaleX(0.91);margin-right:-2.63px">6.62</span></div>
<div class="t" style="top:756.0px;line-height:20px;color:#c8c800;font-size:14px;right:61px;"><span class="n" style="font-size:15px;transform:scaleX(0.91);margin-right:-1.50px">32</span></div>
<div class="t" style="top:756.0px;line-height:20px;color:#00cc00;font-size:14px;left:1872px;"><span class="n" style="font-size:15px;transform:scaleX(0.91);margin-right:-0.90px">S</span></div>
<div class="t" style="top:756.0px;line-height:20px;color:#b0b0b0;font-size:14px;right:8px;"><span class="n" style="font-size:15px;transform:scaleX(0.91);margin-right:-0.75px">1</span></div>
<div class="t" style="top:774.0px;line-height:20px;color:#f0f0f0;font-size:14px;left:1695px;"><span class="n" style="font-size:15px;transform:scaleX(0.91);margin-right:-3.38px">14:24</span></div>
<div class="t" style="top:774.0px;line-height:20px;color:#00cc00;font-size:14px;right:121px;"><span class="n" style="font-size:15px;transform:scaleX(0.91);margin-right:-2.63px">6.62</span></div>
<div class="t" style="top:774.0px;line-height:20px;color:#c8c800;font-size:14px;right:61px;"><span class="n" style="font-size:15px;transform:scaleX(0.91);margin-right:-0.75px">6</span></div>
<div class="t" style="top:774.0px;line-height:20px;color:#00cc00;font-size:14px;left:1872px;"><span class="n" style="font-size:15px;transform:scaleX(0.91);margin-right:-0.90px">S</span></div>
<div class="t" style="top:774.0px;line-height:20px;color:#b0b0b0;font-size:14px;right:8px;"><span class="n" style="font-size:15px;transform:scaleX(0.91);margin-right:-0.75px">4</span></div>
<div class="t" style="top:792.0px;line-height:20px;color:#f0f0f0;font-size:14px;left:1695px;"><span class="n" style="font-size:15px;transform:scaleX(0.91);margin-right:-3.38px">14:24</span></div>
<div class="t" style="top:792.0px;line-height:20px;color:#00cc00;font-size:14px;right:121px;"><span class="n" style="font-size:15px;transform:scaleX(0.91);margin-right:-2.63px">6.63</span></div>
<div class="t" style="top:792.0px;line-height:20px;color:#c8c800;font-size:14px;right:61px;"><span class="n" style="font-size:15px;transform:scaleX(0.91);margin-right:-0.75px">1</span></div>
<div class="t" style="top:792.0px;line-height:20px;color:#ff4040;font-size:14px;left:1872px;"><span class="n" style="font-size:15px;transform:scaleX(0.91);margin-right:-0.90px">B</span></div>
<div class="t" style="top:792.0px;line-height:20px;color:#b0b0b0;font-size:14px;right:8px;"><span class="n" style="font-size:15px;transform:scaleX(0.91);margin-right:-0.75px">1</span></div>
<div class="t" style="top:810.0px;line-height:20px;color:#f0f0f0;font-size:14px;left:1695px;"><span class="n" style="font-size:15px;transform:scaleX(0.91);margin-right:-3.38px">14:24</span></div>
<div class="t" style="top:810.0px;line-height:20px;color:#00cc00;font-size:14px;right:121px;"><span class="n" style="font-size:15px;transform:scaleX(0.91);margin-right:-2.63px">6.62</span></div>
<div class="t" style="top:810.0px;line-height:20px;color:#c8c800;font-size:14px;right:61px;"><span class="n" style="font-size:15px;transform:scaleX(0.91);margin-right:-1.50px">82</span></div>
<div class="t" style="top:810.0px;line-height:20px;color:#00cc00;font-size:14px;left:1872px;"><span class="n" style="font-size:15px;transform:scaleX(0.91);margin-right:-0.90px">S</span></div>
<div class="t" style="top:810.0px;line-height:20px;color:#b0b0b0;font-size:14px;right:8px;"><span class="n" style="font-size:15px;transform:scaleX(0.91);margin-right:-0.75px">1</span></div>
<div class="t" style="top:828.0px;line-height:20px;color:#f0f0f0;font-size:14px;left:1695px;"><span class="n" style="font-size:15px;transform:scaleX(0.91);margin-right:-3.38px">14:24</span></div>
<div class="t" style="top:828.0px;line-height:20px;color:#00cc00;font-size:14px;right:121px;"><span class="n" style="font-size:15px;transform:scaleX(0.91);margin-right:-2.63px">6.62</span></div>
<div class="t" style="top:828.0px;line-height:20px;color:#c8c800;font-size:14px;right:61px;"><span class="n" style="font-size:15px;transform:scaleX(0.91);margin-right:-1.50px">50</span></div>
<div class="t" style="top:828.0px;line-height:20px;color:#00cc00;font-size:14px;left:1872px;"><span class="n" style="font-size:15px;transform:scaleX(0.91);margin-right:-0.90px">S</span></div>
<div class="t" style="top:828.0px;line-height:20px;color:#b0b0b0;font-size:14px;right:8px;"><span class="n" style="font-size:15px;transform:scaleX(0.91);margin-right:-0.75px">2</span></div>
<div class="t" style="top:846.0px;line-height:20px;color:#f0f0f0;font-size:14px;left:1695px;"><span class="n" style="font-size:15px;transform:scaleX(0.91);margin-right:-3.38px">14:24</span></div>
<div class="t" style="top:846.0px;line-height:20px;color:#00cc00;font-size:14px;right:121px;"><span class="n" style="font-size:15px;transform:scaleX(0.91);margin-right:-2.63px">6.61</span></div>
<div class="t" style="top:846.0px;line-height:20px;color:#c8c800;font-size:14px;right:61px;"><span class="n" style="font-size:15px;transform:scaleX(0.91);margin-right:-0.75px">3</span></div>
<div class="t" style="top:846.0px;line-height:20px;color:#00cc00;font-size:14px;left:1872px;"><span class="n" style="font-size:15px;transform:scaleX(0.91);margin-right:-0.90px">S</span></div>
<div class="t" style="top:846.0px;line-height:20px;color:#b0b0b0;font-size:14px;right:8px;"><span class="n" style="font-size:15px;transform:scaleX(0.91);margin-right:-0.75px">1</span></div>
<div class="t" style="top:864.0px;line-height:20px;color:#f0f0f0;font-size:14px;left:1695px;"><span class="n" style="font-size:15px;transform:scaleX(0.91);margin-right:-3.38px">14:24</span></div>
<div class="t" style="top:864.0px;line-height:20px;color:#00cc00;font-size:14px;right:121px;"><span class="n" style="font-size:15px;transform:scaleX(0.91);margin-right:-2.63px">6.61</span></div>
<div class="t" style="top:864.0px;line-height:20px;color:#c8c800;font-size:14px;right:61px;"><span class="n" style="font-size:15px;transform:scaleX(0.91);margin-right:-1.50px">17</span></div>
<div class="t" style="top:864.0px;line-height:20px;color:#00cc00;font-size:14px;left:1872px;"><span class="n" style="font-size:15px;transform:scaleX(0.91);margin-right:-0.90px">S</span></div>
<div class="t" style="top:864.0px;line-height:20px;color:#b0b0b0;font-size:14px;right:8px;"><span class="n" style="font-size:15px;transform:scaleX(0.91);margin-right:-0.75px">2</span></div>
<div class="t" style="top:882.0px;line-height:20px;color:#f0f0f0;font-size:14px;left:1695px;"><span class="n" style="font-size:15px;transform:scaleX(0.91);margin-right:-3.38px">14:25</span></div>
<div class="t" style="top:882.0px;line-height:20px;color:#00cc00;font-size:14px;right:121px;"><span class="n" style="font-size:15px;transform:scaleX(0.91);margin-right:-2.63px">6.61</span></div>
<div class="t" style="top:882.0px;line-height:20px;color:#c8c800;font-size:14px;right:61px;"><span class="n" style="font-size:15px;transform:scaleX(0.91);margin-right:-1.50px">39</span></div>
<div class="t" style="top:882.0px;line-height:20px;color:#00cc00;font-size:14px;left:1872px;"><span class="n" style="font-size:15px;transform:scaleX(0.91);margin-right:-0.90px">S</span></div>
<div class="t" style="top:882.0px;line-height:20px;color:#b0b0b0;font-size:14px;right:8px;"><span class="n" style="font-size:15px;transform:scaleX(0.91);margin-right:-0.75px">3</span></div>
<div class="t" style="top:900.0px;line-height:20px;color:#f0f0f0;font-size:14px;left:1695px;"><span class="n" style="font-size:15px;transform:scaleX(0.91);margin-right:-3.38px">14:25</span></div>
<div class="t" style="top:900.0px;line-height:20px;color:#00cc00;font-size:14px;right:121px;"><span class="n" style="font-size:15px;transform:scaleX(0.91);margin-right:-2.63px">6.62</span></div>
<div class="t" style="top:900.0px;line-height:20px;color:#c8c800;font-size:14px;right:61px;"><span class="n" style="font-size:15px;transform:scaleX(0.91);margin-right:-1.50px">28</span></div>
<div class="t" style="top:900.0px;line-height:20px;color:#ff4040;font-size:14px;left:1872px;"><span class="n" style="font-size:15px;transform:scaleX(0.91);margin-right:-0.90px">B</span></div>
<div class="t" style="top:900.0px;line-height:20px;color:#b0b0b0;font-size:14px;right:8px;"><span class="n" style="font-size:15px;transform:scaleX(0.91);margin-right:-0.75px">6</span></div>
<div class="t" style="top:918.0px;line-height:20px;color:#f0f0f0;font-size:14px;left:1695px;"><span class="n" style="font-size:15px;transform:scaleX(0.91);margin-right:-3.38px">14:25</span></div>
<div class="t" style="top:918.0px;line-height:20px;color:#00cc00;font-size:14px;right:121px;"><span class="n" style="font-size:15px;transform:scaleX(0.91);margin-right:-2.63px">6.62</span></div>
<div class="t" style="top:918.0px;line-height:20px;color:#c8c800;font-size:14px;right:61px;"><span class="n" style="font-size:15px;transform:scaleX(0.91);margin-right:-1.50px">30</span></div>
<div class="t" style="top:918.0px;line-height:20px;color:#ff4040;font-size:14px;left:1872px;"><span class="n" style="font-size:15px;transform:scaleX(0.91);margin-right:-0.90px">B</span></div>
<div class="t" style="top:918.0px;line-height:20px;color:#b0b0b0;font-size:14px;right:8px;"><span class="n" style="font-size:15px;transform:scaleX(0.91);margin-right:-0.75px">4</span></div>
<div class="t" style="top:936.0px;line-height:20px;color:#f0f0f0;font-size:14px;left:1695px;"><span class="n" style="font-size:15px;transform:scaleX(0.91);margin-right:-3.38px">14:25</span></div>
<div class="t" style="top:936.0px;line-height:20px;color:#00cc00;font-size:14px;right:121px;"><span class="n" style="font-size:15px;transform:scaleX(0.91);margin-right:-2.63px">6.62</span></div>
<div class="t" style="top:936.0px;line-height:20px;color:#c8c800;font-size:14px;right:61px;"><span class="n" style="font-size:15px;transform:scaleX(0.91);margin-right:-1.50px">12</span></div>
<div class="t" style="top:936.0px;line-height:20px;color:#ff4040;font-size:14px;left:1872px;"><span class="n" style="font-size:15px;transform:scaleX(0.91);margin-right:-0.90px">B</span></div>
<div class="t" style="top:936.0px;line-height:20px;color:#b0b0b0;font-size:14px;right:8px;"><span class="n" style="font-size:15px;transform:scaleX(0.91);margin-right:-0.75px">1</span></div>
<div class="b" style="left:1688px;top:972px;width:232px;height:19px;background:#0a0a0a;"></div>
<div class="b" style="left:1688px;top:973px;width:28px;height:17px;background:#e23238;"></div>
<div class="t" style="top:973.5px;font-size:12px;line-height:16px;color:#fff;left:1502px;width:400px;text-align:center;">笔</div>
<div class="b" style="left:1717px;top:973px;width:28px;height:17px;background:#1c1c1e;"></div>
<div class="t" style="top:973.5px;font-size:12px;line-height:16px;color:#e6e6e6;left:1531px;width:400px;text-align:center;">价</div>
<div class="b" style="left:1746px;top:973px;width:28px;height:17px;background:#1c1c1e;"></div>
<div class="t" style="top:973.5px;font-size:12px;line-height:16px;color:#e6e6e6;left:1560px;width:400px;text-align:center;">细</div>
<div class="b" style="left:1775px;top:973px;width:28px;height:17px;background:#1c1c1e;"></div>
<div class="t" style="top:973.5px;font-size:12px;line-height:16px;color:#e6e6e6;left:1589px;width:400px;text-align:center;">势</div>
<div class="b" style="left:1804px;top:973px;width:28px;height:17px;background:#1c1c1e;"></div>
<div class="t" style="top:973.5px;font-size:12px;line-height:16px;color:#e6e6e6;left:1618px;width:400px;text-align:center;">联</div>
<div class="b" style="left:1833px;top:973px;width:28px;height:17px;background:#1c1c1e;"></div>
<div class="t" style="top:973.5px;font-size:12px;line-height:16px;color:#e6e6e6;left:1647px;width:400px;text-align:center;">值</div>
<div class="b" style="left:1862px;top:973px;width:28px;height:17px;background:#1c1c1e;"></div>
<div class="t" style="top:973.5px;font-size:12px;line-height:16px;color:#e6e6e6;left:1676px;width:400px;text-align:center;">主</div>
<div class="b" style="left:1891px;top:973px;width:28px;height:17px;background:#1c1c1e;"></div>
<div class="t" style="top:973.5px;font-size:12px;line-height:16px;color:#e6e6e6;left:1705px;width:400px;text-align:center;">筹</div>
<div class="b" style="left:3px;top:1019px;width:16px;height:16px;border-radius:8px;background:linear-gradient(#b4bac4,#747a84);"></div>
<svg width="30" height="1042" viewBox="0 0 30 1042" fill="none" stroke="#1a1e26" stroke-width="1.3"><path d="M7 1023l4 3.500 4-3.500M7 1027l4 3.500 4-3.500"/></svg>
<div class="t" style="top:1019.2px;font-size:12.5px;line-height:16.5px;color:#c8d0dc;left:27px;">上证</div>
<div class="t" style="top:1019.2px;font-size:12.5px;line-height:16.5px;color:#5ae634;left:54px;">3289.45</div>
<div class="t" style="top:1019.2px;font-size:12.5px;line-height:16.5px;color:#5ae634;left:108px;">-24.13</div>
<div class="t" style="top:1019.2px;font-size:12.5px;line-height:16.5px;color:#5ae634;left:153px;">-0.73%</div>
<div class="t" style="top:1019.2px;font-size:12.5px;line-height:16.5px;color:#c8d0dc;left:196px;">3550亿</div>
<div class="t" style="top:1019.2px;font-size:12.5px;line-height:16.5px;color:#c8d0dc;left:245px;">深证</div>
<div class="t" style="top:1019.2px;font-size:12.5px;line-height:16.5px;color:#5ae634;left:273px;">12478.1</div>
<div class="t" style="top:1019.2px;font-size:12.5px;line-height:16.5px;color:#5ae634;left:322px;">-139.17</div>
<div class="t" style="top:1019.2px;font-size:12.5px;line-height:16.5px;color:#5ae634;left:372px;">-1.10%</div>
<div class="t" style="top:1019.2px;font-size:12.5px;line-height:16.5px;color:#c8d0dc;left:415px;">4917亿</div>
<div class="t" style="top:1019.2px;font-size:12.5px;line-height:16.5px;color:#c8d0dc;left:465px;">沪深</div>
<div class="t" style="top:1019.2px;font-size:12.5px;line-height:16.5px;color:#5ae634;left:493px;">4322.17</div>
<div class="t" style="top:1019.2px;font-size:12.5px;line-height:16.5px;color:#5ae634;left:547px;">-32.45</div>
<div class="t" style="top:1019.2px;font-size:12.5px;line-height:16.5px;color:#5ae634;left:592px;">-0.75%</div>
<div class="t" style="top:1019.2px;font-size:12.5px;line-height:16.5px;color:#c8d0dc;left:635px;">2543亿</div>
<div class="t" style="top:1019.2px;font-size:12.5px;line-height:16.5px;color:#c8d0dc;left:685px;">创业</div>
<div class="t" style="top:1019.2px;font-size:12.5px;line-height:16.5px;color:#5ae634;left:713px;">2711.32</div>
<div class="t" style="top:1019.2px;font-size:12.5px;line-height:16.5px;color:#5ae634;left:767px;">-56.14</div>
<div class="t" style="top:1019.2px;font-size:12.5px;line-height:16.5px;color:#5ae634;left:812px;">-2.03%</div>
<div class="t" style="top:1019.2px;font-size:12.5px;line-height:16.5px;color:#c8d0dc;left:855px;">1487亿</div>
<div class="t" style="top:1019.2px;font-size:12.5px;line-height:16.5px;color:#c8d0dc;left:905px;">科创</div>
<div class="t" style="top:1019.2px;font-size:12.5px;line-height:16.5px;color:#5ae634;left:933px;">1054.00</div>
<div class="t" style="top:1019.2px;font-size:12.5px;line-height:16.5px;color:#5ae634;left:987px;">-27.16</div>
<div class="t" style="top:1019.2px;font-size:12.5px;line-height:16.5px;color:#5ae634;left:1032px;">-2.51%</div>
<div class="t" style="top:1019.2px;font-size:12.5px;line-height:16.5px;color:#c8d0dc;left:1075px;">440.8亿</div>
<svg width="1300" height="1042" viewBox="0 0 1300 1042" shape-rendering="crispEdges"><rect x="1128.5" y="1021.500" width="49" height="5" fill="none" stroke="#e8e8e8"/><rect x="1140" y="1022" width="13" height="4" fill="#ff1010"/><rect x="1153" y="1022" width="12" height="4" fill="#109010"/><path d="M1165.5 1022v4" stroke="#e8e8e8"/><rect x="1180.5" y="1021.500" width="49" height="5" fill="none" stroke="#e8e8e8"/><rect x="1192" y="1022" width="13" height="4" fill="#ff1010"/><rect x="1205" y="1022" width="12" height="4" fill="#109010"/><path d="M1217.5 1022v4" stroke="#e8e8e8"/><path d="M1134.5 1028v6M1132 1031l3-3 3 3" stroke="#10b010" stroke-width="1.500" fill="none"/><path d="M1139 1030h5M1139 1033h5" stroke="#10b010" stroke-width="1.500"/><path d="M1148.5 1028v6M1146 1031l3-3 3 3" stroke="#ff2020" stroke-width="1.500" fill="none"/><path d="M1153 1030h5M1153 1033h5" stroke="#ff2020" stroke-width="1.500"/><path d="M1160 1030h5M1160 1033h5" stroke="#ff2020" stroke-width="1.500"/><path d="M1167 1030h5M1167 1033h5" stroke="#ff2020" stroke-width="1.500"/><path d="M1174 1030h5M1174 1033h5" stroke="#ff2020" stroke-width="1.500"/><path d="M1186.5 1028v6M1184 1031l3-3 3 3" stroke="#10b010" stroke-width="1.500" fill="none"/><path d="M1191 1030h5M1191 1033h5" stroke="#10b010" stroke-width="1.500"/><path d="M1200.5 1028v6M1198 1031l3-3 3 3" stroke="#10b010" stroke-width="1.500" fill="none"/><path d="M1205 1030h5M1205 1033h5" stroke="#10b010" stroke-width="1.500"/><path d="M1212 1030h5M1212 1033h5" stroke="#10b010" stroke-width="1.500"/><path d="M1219 1030h5M1219 1033h5" stroke="#10b010" stroke-width="1.500"/><path d="M1226 1030h5M1226 1033h5" stroke="#10b010" stroke-width="1.500"/></svg>
<div class="b" style="left:1239px;top:1020px;width:15px;height:13px;background:#8a9098;border-radius:3px;"></div>
<div class="t" style="top:1020.5px;font-size:8px;line-height:12px;color:#1a1e26;font-weight:bold;left:1046.5px;width:400px;text-align:center;">(•)</div>
<div class="b" style="left:1259px;top:1020px;width:14px;height:13px;background:#b8bec6;border-radius:3px;"></div>
<div class="t" style="top:1019.0px;font-size:11px;line-height:15px;color:#fff;font-weight:bold;left:1066px;width:400px;text-align:center;">1</div>
<div class="t" style="top:1019.0px;font-size:12px;line-height:16px;color:#c8d0dc;left:1277px;">北京联通主站Z2</div>
<div class="b" style="left:1402px;top:1014px;width:141px;height:24px;background:#fafcff;"></div>
<svg width="1920" height="1042" viewBox="0 0 1920 1042">
<defs><linearGradient id="sg" x1="0" y1="0" x2="0" y2="1"><stop offset="0" stop-color="#46c832"/><stop offset="1" stop-color="#28a528"/></linearGradient></defs>
<g transform="rotate(-17 1393 1024.500)"><rect x="1381.500" y="1013" width="23" height="23" rx="3" fill="url(#sg)"/>
<text x="1393" y="1034" font-size="25" font-weight="bold" fill="#fff" text-anchor="middle" transform="translate(1393 0) scale(1.250 1) translate(-1393 0)">S</text></g>
<g fill="#44475a">
<circle cx="1441" cy="1024.500" r="7.500"/><circle cx="1437.500" cy="1021" r="7.200" fill="#fafcff"/>
<circle cx="1460" cy="1023" r="2" fill="none" stroke="#44475a" stroke-width="1.400"/><path d="M1464.500 1027.500h3.500q0 4.500-3.500 5.500v-1.500q1.500-.5 1.500-2h-1.500z"/>
<rect x="1478" y="1020" width="16" height="12" rx="2"/>
<path d="M1480.500 1023h11M1480.500 1025.800h11" stroke="#fafcff" stroke-width="1.400" stroke-dasharray="1.500 .9"/><path d="M1480.500 1029h2M1483.500 1029h8" stroke="#fafcff" stroke-width="1.600"/>
<circle cx="1509" cy="1021.500" r="3.200"/><path d="M1505 1025.500h8l2.500 3.500h-2.200l-1.300 3.500h-6l-1.300-3.500h-2.200z"/>
<circle cx="1527" cy="1023" r="3.100"/><circle cx="1533.500" cy="1023" r="2.400" fill="none" stroke="#44475a" stroke-width="1.400"/><circle cx="1527" cy="1029.500" r="3.100"/><circle cx="1533.500" cy="1029.500" r="3.100"/>
</g>
<defs><linearGradient id="ig" x1="0" y1="0" x2="0" y2="1"><stop offset="0" stop-color="#9aa0ac"/><stop offset="1" stop-color="#6c727e"/></linearGradient></defs>
<rect x="1798" y="1020" width="15" height="12" rx="2" fill="url(#ig)"/><path d="M1801 1023.500h9M1801 1025.500h9" stroke="#1b1f27" stroke-width="1" stroke-dasharray="1 .6"/><path d="M1801 1028.500h9" stroke="#1b1f27" stroke-width="1"/>
<rect x="1828" y="1020" width="15" height="10" rx="2" fill="url(#ig)"/><path d="M1830 1025h3l1.500-2 2 4 1.500-2h3" stroke="#1b1f27" stroke-width="1" fill="none"/><path d="M1835.500 1030v2M1832 1032h7" stroke="#7c828e" stroke-width="1"/>
<path d="M1860 1019q-3 6 1 10.500t9.500 2.500z" fill="url(#ig)"/><path d="M1865 1025l4-4M1861 1031l-2 3h6l-2-3" stroke="#8a909c" stroke-width="1.200" fill="none"/>
<rect x="1870" y="1018" width="46" height="22" fill="#fff"/>
<path d="M1874.500 1020v20" stroke="#bbb" stroke-width="1" stroke-dasharray="1 2"/>
<g transform="rotate(-14 1888 1029)"><rect x="1880.500" y="1021.500" width="15" height="15" rx="2" fill="url(#sg)"/>
<text x="1888" y="1035" font-size="16" font-weight="bold" fill="#fff" text-anchor="middle" transform="translate(1888 0) scale(1.250 1) translate(-1888 0)">S</text></g>
<path d="M1905 1025.500h5" stroke="#111" stroke-width="2"/><path d="M1904.500 1032h6l-3 3z" fill="#111"/>
</svg>
<div class="t" style="top:1017.0px;font-size:15px;line-height:19px;color:#44475a;font-weight:bold;left:1413px;">五</div>
<div class="t" style="top:1017.0px;font-size:12px;line-height:16px;color:#dcdcdc;left:1754px;">7x24</div>
</body></html>
